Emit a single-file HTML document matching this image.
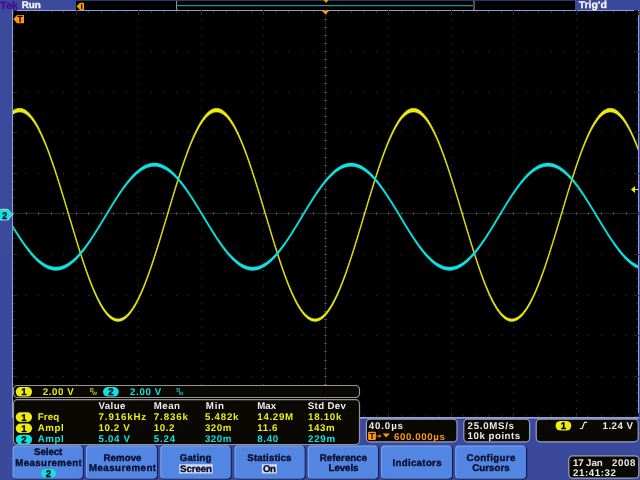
<!DOCTYPE html>
<html><head><meta charset="utf-8"><title>Tek Run Trig'd</title>
<style>html,body{margin:0;padding:0;background:#3c4a9c;overflow:hidden}svg{display:block;will-change:transform;opacity:0.999}text{font-family:"Liberation Sans",sans-serif;font-weight:bold;font-size:9.7px;text-rendering:geometricPrecision}</style>
</head><body>
<svg width="640" height="480" viewBox="0 0 640 480">
<rect x="0" y="0" width="640" height="480" fill="#3c4a9c"/>
<rect x="12" y="10" width="627" height="408" fill="#95a2dc"/>
<rect x="360" y="418" width="280" height="1" fill="#7486d0"/>
<rect x="13" y="11" width="625" height="406" fill="#000"/>
<rect x="76" y="0" width="499" height="10" fill="#000"/>
<rect x="76" y="0" width="499" height="1" fill="#2c356f"/>
<rect x="76" y="10" width="499" height="1" fill="#8d9bd6"/>
<g fill="#343434"><rect x="13" y="51" width="1" height="1"/><rect x="26" y="51" width="1" height="1"/><rect x="38" y="51" width="1" height="1"/><rect x="51" y="51" width="1" height="1"/><rect x="63" y="51" width="1" height="1"/><rect x="76" y="51" width="1" height="1"/><rect x="88" y="51" width="1" height="1"/><rect x="101" y="51" width="1" height="1"/><rect x="113" y="51" width="1" height="1"/><rect x="126" y="51" width="1" height="1"/><rect x="138" y="51" width="1" height="1"/><rect x="151" y="51" width="1" height="1"/><rect x="163" y="51" width="1" height="1"/><rect x="176" y="51" width="1" height="1"/><rect x="188" y="51" width="1" height="1"/><rect x="201" y="51" width="1" height="1"/><rect x="213" y="51" width="1" height="1"/><rect x="226" y="51" width="1" height="1"/><rect x="238" y="51" width="1" height="1"/><rect x="251" y="51" width="1" height="1"/><rect x="263" y="51" width="1" height="1"/><rect x="276" y="51" width="1" height="1"/><rect x="288" y="51" width="1" height="1"/><rect x="301" y="51" width="1" height="1"/><rect x="313" y="51" width="1" height="1"/><rect x="326" y="51" width="1" height="1"/><rect x="338" y="51" width="1" height="1"/><rect x="351" y="51" width="1" height="1"/><rect x="363" y="51" width="1" height="1"/><rect x="376" y="51" width="1" height="1"/><rect x="388" y="51" width="1" height="1"/><rect x="401" y="51" width="1" height="1"/><rect x="413" y="51" width="1" height="1"/><rect x="426" y="51" width="1" height="1"/><rect x="438" y="51" width="1" height="1"/><rect x="451" y="51" width="1" height="1"/><rect x="463" y="51" width="1" height="1"/><rect x="476" y="51" width="1" height="1"/><rect x="488" y="51" width="1" height="1"/><rect x="501" y="51" width="1" height="1"/><rect x="513" y="51" width="1" height="1"/><rect x="526" y="51" width="1" height="1"/><rect x="538" y="51" width="1" height="1"/><rect x="551" y="51" width="1" height="1"/><rect x="563" y="51" width="1" height="1"/><rect x="576" y="51" width="1" height="1"/><rect x="588" y="51" width="1" height="1"/><rect x="601" y="51" width="1" height="1"/><rect x="613" y="51" width="1" height="1"/><rect x="626" y="51" width="1" height="1"/><rect x="638" y="51" width="1" height="1"/><rect x="13" y="92" width="1" height="1"/><rect x="26" y="92" width="1" height="1"/><rect x="38" y="92" width="1" height="1"/><rect x="51" y="92" width="1" height="1"/><rect x="63" y="92" width="1" height="1"/><rect x="76" y="92" width="1" height="1"/><rect x="88" y="92" width="1" height="1"/><rect x="101" y="92" width="1" height="1"/><rect x="113" y="92" width="1" height="1"/><rect x="126" y="92" width="1" height="1"/><rect x="138" y="92" width="1" height="1"/><rect x="151" y="92" width="1" height="1"/><rect x="163" y="92" width="1" height="1"/><rect x="176" y="92" width="1" height="1"/><rect x="188" y="92" width="1" height="1"/><rect x="201" y="92" width="1" height="1"/><rect x="213" y="92" width="1" height="1"/><rect x="226" y="92" width="1" height="1"/><rect x="238" y="92" width="1" height="1"/><rect x="251" y="92" width="1" height="1"/><rect x="263" y="92" width="1" height="1"/><rect x="276" y="92" width="1" height="1"/><rect x="288" y="92" width="1" height="1"/><rect x="301" y="92" width="1" height="1"/><rect x="313" y="92" width="1" height="1"/><rect x="326" y="92" width="1" height="1"/><rect x="338" y="92" width="1" height="1"/><rect x="351" y="92" width="1" height="1"/><rect x="363" y="92" width="1" height="1"/><rect x="376" y="92" width="1" height="1"/><rect x="388" y="92" width="1" height="1"/><rect x="401" y="92" width="1" height="1"/><rect x="413" y="92" width="1" height="1"/><rect x="426" y="92" width="1" height="1"/><rect x="438" y="92" width="1" height="1"/><rect x="451" y="92" width="1" height="1"/><rect x="463" y="92" width="1" height="1"/><rect x="476" y="92" width="1" height="1"/><rect x="488" y="92" width="1" height="1"/><rect x="501" y="92" width="1" height="1"/><rect x="513" y="92" width="1" height="1"/><rect x="526" y="92" width="1" height="1"/><rect x="538" y="92" width="1" height="1"/><rect x="551" y="92" width="1" height="1"/><rect x="563" y="92" width="1" height="1"/><rect x="576" y="92" width="1" height="1"/><rect x="588" y="92" width="1" height="1"/><rect x="601" y="92" width="1" height="1"/><rect x="613" y="92" width="1" height="1"/><rect x="626" y="92" width="1" height="1"/><rect x="638" y="92" width="1" height="1"/><rect x="13" y="132" width="1" height="1"/><rect x="26" y="132" width="1" height="1"/><rect x="38" y="132" width="1" height="1"/><rect x="51" y="132" width="1" height="1"/><rect x="63" y="132" width="1" height="1"/><rect x="76" y="132" width="1" height="1"/><rect x="88" y="132" width="1" height="1"/><rect x="101" y="132" width="1" height="1"/><rect x="113" y="132" width="1" height="1"/><rect x="126" y="132" width="1" height="1"/><rect x="138" y="132" width="1" height="1"/><rect x="151" y="132" width="1" height="1"/><rect x="163" y="132" width="1" height="1"/><rect x="176" y="132" width="1" height="1"/><rect x="188" y="132" width="1" height="1"/><rect x="201" y="132" width="1" height="1"/><rect x="213" y="132" width="1" height="1"/><rect x="226" y="132" width="1" height="1"/><rect x="238" y="132" width="1" height="1"/><rect x="251" y="132" width="1" height="1"/><rect x="263" y="132" width="1" height="1"/><rect x="276" y="132" width="1" height="1"/><rect x="288" y="132" width="1" height="1"/><rect x="301" y="132" width="1" height="1"/><rect x="313" y="132" width="1" height="1"/><rect x="326" y="132" width="1" height="1"/><rect x="338" y="132" width="1" height="1"/><rect x="351" y="132" width="1" height="1"/><rect x="363" y="132" width="1" height="1"/><rect x="376" y="132" width="1" height="1"/><rect x="388" y="132" width="1" height="1"/><rect x="401" y="132" width="1" height="1"/><rect x="413" y="132" width="1" height="1"/><rect x="426" y="132" width="1" height="1"/><rect x="438" y="132" width="1" height="1"/><rect x="451" y="132" width="1" height="1"/><rect x="463" y="132" width="1" height="1"/><rect x="476" y="132" width="1" height="1"/><rect x="488" y="132" width="1" height="1"/><rect x="501" y="132" width="1" height="1"/><rect x="513" y="132" width="1" height="1"/><rect x="526" y="132" width="1" height="1"/><rect x="538" y="132" width="1" height="1"/><rect x="551" y="132" width="1" height="1"/><rect x="563" y="132" width="1" height="1"/><rect x="576" y="132" width="1" height="1"/><rect x="588" y="132" width="1" height="1"/><rect x="601" y="132" width="1" height="1"/><rect x="613" y="132" width="1" height="1"/><rect x="626" y="132" width="1" height="1"/><rect x="638" y="132" width="1" height="1"/><rect x="13" y="173" width="1" height="1"/><rect x="26" y="173" width="1" height="1"/><rect x="38" y="173" width="1" height="1"/><rect x="51" y="173" width="1" height="1"/><rect x="63" y="173" width="1" height="1"/><rect x="76" y="173" width="1" height="1"/><rect x="88" y="173" width="1" height="1"/><rect x="101" y="173" width="1" height="1"/><rect x="113" y="173" width="1" height="1"/><rect x="126" y="173" width="1" height="1"/><rect x="138" y="173" width="1" height="1"/><rect x="151" y="173" width="1" height="1"/><rect x="163" y="173" width="1" height="1"/><rect x="176" y="173" width="1" height="1"/><rect x="188" y="173" width="1" height="1"/><rect x="201" y="173" width="1" height="1"/><rect x="213" y="173" width="1" height="1"/><rect x="226" y="173" width="1" height="1"/><rect x="238" y="173" width="1" height="1"/><rect x="251" y="173" width="1" height="1"/><rect x="263" y="173" width="1" height="1"/><rect x="276" y="173" width="1" height="1"/><rect x="288" y="173" width="1" height="1"/><rect x="301" y="173" width="1" height="1"/><rect x="313" y="173" width="1" height="1"/><rect x="326" y="173" width="1" height="1"/><rect x="338" y="173" width="1" height="1"/><rect x="351" y="173" width="1" height="1"/><rect x="363" y="173" width="1" height="1"/><rect x="376" y="173" width="1" height="1"/><rect x="388" y="173" width="1" height="1"/><rect x="401" y="173" width="1" height="1"/><rect x="413" y="173" width="1" height="1"/><rect x="426" y="173" width="1" height="1"/><rect x="438" y="173" width="1" height="1"/><rect x="451" y="173" width="1" height="1"/><rect x="463" y="173" width="1" height="1"/><rect x="476" y="173" width="1" height="1"/><rect x="488" y="173" width="1" height="1"/><rect x="501" y="173" width="1" height="1"/><rect x="513" y="173" width="1" height="1"/><rect x="526" y="173" width="1" height="1"/><rect x="538" y="173" width="1" height="1"/><rect x="551" y="173" width="1" height="1"/><rect x="563" y="173" width="1" height="1"/><rect x="576" y="173" width="1" height="1"/><rect x="588" y="173" width="1" height="1"/><rect x="601" y="173" width="1" height="1"/><rect x="613" y="173" width="1" height="1"/><rect x="626" y="173" width="1" height="1"/><rect x="638" y="173" width="1" height="1"/><rect x="13" y="254" width="1" height="1"/><rect x="26" y="254" width="1" height="1"/><rect x="38" y="254" width="1" height="1"/><rect x="51" y="254" width="1" height="1"/><rect x="63" y="254" width="1" height="1"/><rect x="76" y="254" width="1" height="1"/><rect x="88" y="254" width="1" height="1"/><rect x="101" y="254" width="1" height="1"/><rect x="113" y="254" width="1" height="1"/><rect x="126" y="254" width="1" height="1"/><rect x="138" y="254" width="1" height="1"/><rect x="151" y="254" width="1" height="1"/><rect x="163" y="254" width="1" height="1"/><rect x="176" y="254" width="1" height="1"/><rect x="188" y="254" width="1" height="1"/><rect x="201" y="254" width="1" height="1"/><rect x="213" y="254" width="1" height="1"/><rect x="226" y="254" width="1" height="1"/><rect x="238" y="254" width="1" height="1"/><rect x="251" y="254" width="1" height="1"/><rect x="263" y="254" width="1" height="1"/><rect x="276" y="254" width="1" height="1"/><rect x="288" y="254" width="1" height="1"/><rect x="301" y="254" width="1" height="1"/><rect x="313" y="254" width="1" height="1"/><rect x="326" y="254" width="1" height="1"/><rect x="338" y="254" width="1" height="1"/><rect x="351" y="254" width="1" height="1"/><rect x="363" y="254" width="1" height="1"/><rect x="376" y="254" width="1" height="1"/><rect x="388" y="254" width="1" height="1"/><rect x="401" y="254" width="1" height="1"/><rect x="413" y="254" width="1" height="1"/><rect x="426" y="254" width="1" height="1"/><rect x="438" y="254" width="1" height="1"/><rect x="451" y="254" width="1" height="1"/><rect x="463" y="254" width="1" height="1"/><rect x="476" y="254" width="1" height="1"/><rect x="488" y="254" width="1" height="1"/><rect x="501" y="254" width="1" height="1"/><rect x="513" y="254" width="1" height="1"/><rect x="526" y="254" width="1" height="1"/><rect x="538" y="254" width="1" height="1"/><rect x="551" y="254" width="1" height="1"/><rect x="563" y="254" width="1" height="1"/><rect x="576" y="254" width="1" height="1"/><rect x="588" y="254" width="1" height="1"/><rect x="601" y="254" width="1" height="1"/><rect x="613" y="254" width="1" height="1"/><rect x="626" y="254" width="1" height="1"/><rect x="638" y="254" width="1" height="1"/><rect x="13" y="295" width="1" height="1"/><rect x="26" y="295" width="1" height="1"/><rect x="38" y="295" width="1" height="1"/><rect x="51" y="295" width="1" height="1"/><rect x="63" y="295" width="1" height="1"/><rect x="76" y="295" width="1" height="1"/><rect x="88" y="295" width="1" height="1"/><rect x="101" y="295" width="1" height="1"/><rect x="113" y="295" width="1" height="1"/><rect x="126" y="295" width="1" height="1"/><rect x="138" y="295" width="1" height="1"/><rect x="151" y="295" width="1" height="1"/><rect x="163" y="295" width="1" height="1"/><rect x="176" y="295" width="1" height="1"/><rect x="188" y="295" width="1" height="1"/><rect x="201" y="295" width="1" height="1"/><rect x="213" y="295" width="1" height="1"/><rect x="226" y="295" width="1" height="1"/><rect x="238" y="295" width="1" height="1"/><rect x="251" y="295" width="1" height="1"/><rect x="263" y="295" width="1" height="1"/><rect x="276" y="295" width="1" height="1"/><rect x="288" y="295" width="1" height="1"/><rect x="301" y="295" width="1" height="1"/><rect x="313" y="295" width="1" height="1"/><rect x="326" y="295" width="1" height="1"/><rect x="338" y="295" width="1" height="1"/><rect x="351" y="295" width="1" height="1"/><rect x="363" y="295" width="1" height="1"/><rect x="376" y="295" width="1" height="1"/><rect x="388" y="295" width="1" height="1"/><rect x="401" y="295" width="1" height="1"/><rect x="413" y="295" width="1" height="1"/><rect x="426" y="295" width="1" height="1"/><rect x="438" y="295" width="1" height="1"/><rect x="451" y="295" width="1" height="1"/><rect x="463" y="295" width="1" height="1"/><rect x="476" y="295" width="1" height="1"/><rect x="488" y="295" width="1" height="1"/><rect x="501" y="295" width="1" height="1"/><rect x="513" y="295" width="1" height="1"/><rect x="526" y="295" width="1" height="1"/><rect x="538" y="295" width="1" height="1"/><rect x="551" y="295" width="1" height="1"/><rect x="563" y="295" width="1" height="1"/><rect x="576" y="295" width="1" height="1"/><rect x="588" y="295" width="1" height="1"/><rect x="601" y="295" width="1" height="1"/><rect x="613" y="295" width="1" height="1"/><rect x="626" y="295" width="1" height="1"/><rect x="638" y="295" width="1" height="1"/><rect x="13" y="335" width="1" height="1"/><rect x="26" y="335" width="1" height="1"/><rect x="38" y="335" width="1" height="1"/><rect x="51" y="335" width="1" height="1"/><rect x="63" y="335" width="1" height="1"/><rect x="76" y="335" width="1" height="1"/><rect x="88" y="335" width="1" height="1"/><rect x="101" y="335" width="1" height="1"/><rect x="113" y="335" width="1" height="1"/><rect x="126" y="335" width="1" height="1"/><rect x="138" y="335" width="1" height="1"/><rect x="151" y="335" width="1" height="1"/><rect x="163" y="335" width="1" height="1"/><rect x="176" y="335" width="1" height="1"/><rect x="188" y="335" width="1" height="1"/><rect x="201" y="335" width="1" height="1"/><rect x="213" y="335" width="1" height="1"/><rect x="226" y="335" width="1" height="1"/><rect x="238" y="335" width="1" height="1"/><rect x="251" y="335" width="1" height="1"/><rect x="263" y="335" width="1" height="1"/><rect x="276" y="335" width="1" height="1"/><rect x="288" y="335" width="1" height="1"/><rect x="301" y="335" width="1" height="1"/><rect x="313" y="335" width="1" height="1"/><rect x="326" y="335" width="1" height="1"/><rect x="338" y="335" width="1" height="1"/><rect x="351" y="335" width="1" height="1"/><rect x="363" y="335" width="1" height="1"/><rect x="376" y="335" width="1" height="1"/><rect x="388" y="335" width="1" height="1"/><rect x="401" y="335" width="1" height="1"/><rect x="413" y="335" width="1" height="1"/><rect x="426" y="335" width="1" height="1"/><rect x="438" y="335" width="1" height="1"/><rect x="451" y="335" width="1" height="1"/><rect x="463" y="335" width="1" height="1"/><rect x="476" y="335" width="1" height="1"/><rect x="488" y="335" width="1" height="1"/><rect x="501" y="335" width="1" height="1"/><rect x="513" y="335" width="1" height="1"/><rect x="526" y="335" width="1" height="1"/><rect x="538" y="335" width="1" height="1"/><rect x="551" y="335" width="1" height="1"/><rect x="563" y="335" width="1" height="1"/><rect x="576" y="335" width="1" height="1"/><rect x="588" y="335" width="1" height="1"/><rect x="601" y="335" width="1" height="1"/><rect x="613" y="335" width="1" height="1"/><rect x="626" y="335" width="1" height="1"/><rect x="638" y="335" width="1" height="1"/><rect x="13" y="376" width="1" height="1"/><rect x="26" y="376" width="1" height="1"/><rect x="38" y="376" width="1" height="1"/><rect x="51" y="376" width="1" height="1"/><rect x="63" y="376" width="1" height="1"/><rect x="76" y="376" width="1" height="1"/><rect x="88" y="376" width="1" height="1"/><rect x="101" y="376" width="1" height="1"/><rect x="113" y="376" width="1" height="1"/><rect x="126" y="376" width="1" height="1"/><rect x="138" y="376" width="1" height="1"/><rect x="151" y="376" width="1" height="1"/><rect x="163" y="376" width="1" height="1"/><rect x="176" y="376" width="1" height="1"/><rect x="188" y="376" width="1" height="1"/><rect x="201" y="376" width="1" height="1"/><rect x="213" y="376" width="1" height="1"/><rect x="226" y="376" width="1" height="1"/><rect x="238" y="376" width="1" height="1"/><rect x="251" y="376" width="1" height="1"/><rect x="263" y="376" width="1" height="1"/><rect x="276" y="376" width="1" height="1"/><rect x="288" y="376" width="1" height="1"/><rect x="301" y="376" width="1" height="1"/><rect x="313" y="376" width="1" height="1"/><rect x="326" y="376" width="1" height="1"/><rect x="338" y="376" width="1" height="1"/><rect x="351" y="376" width="1" height="1"/><rect x="363" y="376" width="1" height="1"/><rect x="376" y="376" width="1" height="1"/><rect x="388" y="376" width="1" height="1"/><rect x="401" y="376" width="1" height="1"/><rect x="413" y="376" width="1" height="1"/><rect x="426" y="376" width="1" height="1"/><rect x="438" y="376" width="1" height="1"/><rect x="451" y="376" width="1" height="1"/><rect x="463" y="376" width="1" height="1"/><rect x="476" y="376" width="1" height="1"/><rect x="488" y="376" width="1" height="1"/><rect x="501" y="376" width="1" height="1"/><rect x="513" y="376" width="1" height="1"/><rect x="526" y="376" width="1" height="1"/><rect x="538" y="376" width="1" height="1"/><rect x="551" y="376" width="1" height="1"/><rect x="563" y="376" width="1" height="1"/><rect x="576" y="376" width="1" height="1"/><rect x="588" y="376" width="1" height="1"/><rect x="601" y="376" width="1" height="1"/><rect x="613" y="376" width="1" height="1"/><rect x="626" y="376" width="1" height="1"/><rect x="638" y="376" width="1" height="1"/><rect x="76" y="10" width="1" height="1"/><rect x="76" y="19" width="1" height="1"/><rect x="76" y="27" width="1" height="1"/><rect x="76" y="35" width="1" height="1"/><rect x="76" y="43" width="1" height="1"/><rect x="76" y="51" width="1" height="1"/><rect x="76" y="59" width="1" height="1"/><rect x="76" y="67" width="1" height="1"/><rect x="76" y="75" width="1" height="1"/><rect x="76" y="83" width="1" height="1"/><rect x="76" y="92" width="1" height="1"/><rect x="76" y="100" width="1" height="1"/><rect x="76" y="108" width="1" height="1"/><rect x="76" y="116" width="1" height="1"/><rect x="76" y="124" width="1" height="1"/><rect x="76" y="132" width="1" height="1"/><rect x="76" y="140" width="1" height="1"/><rect x="76" y="148" width="1" height="1"/><rect x="76" y="157" width="1" height="1"/><rect x="76" y="165" width="1" height="1"/><rect x="76" y="173" width="1" height="1"/><rect x="76" y="181" width="1" height="1"/><rect x="76" y="189" width="1" height="1"/><rect x="76" y="197" width="1" height="1"/><rect x="76" y="205" width="1" height="1"/><rect x="76" y="213" width="1" height="1"/><rect x="76" y="222" width="1" height="1"/><rect x="76" y="230" width="1" height="1"/><rect x="76" y="238" width="1" height="1"/><rect x="76" y="246" width="1" height="1"/><rect x="76" y="254" width="1" height="1"/><rect x="76" y="262" width="1" height="1"/><rect x="76" y="270" width="1" height="1"/><rect x="76" y="278" width="1" height="1"/><rect x="76" y="286" width="1" height="1"/><rect x="76" y="295" width="1" height="1"/><rect x="76" y="303" width="1" height="1"/><rect x="76" y="311" width="1" height="1"/><rect x="76" y="319" width="1" height="1"/><rect x="76" y="327" width="1" height="1"/><rect x="76" y="335" width="1" height="1"/><rect x="76" y="343" width="1" height="1"/><rect x="76" y="351" width="1" height="1"/><rect x="76" y="360" width="1" height="1"/><rect x="76" y="368" width="1" height="1"/><rect x="76" y="376" width="1" height="1"/><rect x="76" y="384" width="1" height="1"/><rect x="76" y="392" width="1" height="1"/><rect x="76" y="400" width="1" height="1"/><rect x="76" y="408" width="1" height="1"/><rect x="76" y="416" width="1" height="1"/><rect x="138" y="10" width="1" height="1"/><rect x="138" y="19" width="1" height="1"/><rect x="138" y="27" width="1" height="1"/><rect x="138" y="35" width="1" height="1"/><rect x="138" y="43" width="1" height="1"/><rect x="138" y="51" width="1" height="1"/><rect x="138" y="59" width="1" height="1"/><rect x="138" y="67" width="1" height="1"/><rect x="138" y="75" width="1" height="1"/><rect x="138" y="83" width="1" height="1"/><rect x="138" y="92" width="1" height="1"/><rect x="138" y="100" width="1" height="1"/><rect x="138" y="108" width="1" height="1"/><rect x="138" y="116" width="1" height="1"/><rect x="138" y="124" width="1" height="1"/><rect x="138" y="132" width="1" height="1"/><rect x="138" y="140" width="1" height="1"/><rect x="138" y="148" width="1" height="1"/><rect x="138" y="157" width="1" height="1"/><rect x="138" y="165" width="1" height="1"/><rect x="138" y="173" width="1" height="1"/><rect x="138" y="181" width="1" height="1"/><rect x="138" y="189" width="1" height="1"/><rect x="138" y="197" width="1" height="1"/><rect x="138" y="205" width="1" height="1"/><rect x="138" y="213" width="1" height="1"/><rect x="138" y="222" width="1" height="1"/><rect x="138" y="230" width="1" height="1"/><rect x="138" y="238" width="1" height="1"/><rect x="138" y="246" width="1" height="1"/><rect x="138" y="254" width="1" height="1"/><rect x="138" y="262" width="1" height="1"/><rect x="138" y="270" width="1" height="1"/><rect x="138" y="278" width="1" height="1"/><rect x="138" y="286" width="1" height="1"/><rect x="138" y="295" width="1" height="1"/><rect x="138" y="303" width="1" height="1"/><rect x="138" y="311" width="1" height="1"/><rect x="138" y="319" width="1" height="1"/><rect x="138" y="327" width="1" height="1"/><rect x="138" y="335" width="1" height="1"/><rect x="138" y="343" width="1" height="1"/><rect x="138" y="351" width="1" height="1"/><rect x="138" y="360" width="1" height="1"/><rect x="138" y="368" width="1" height="1"/><rect x="138" y="376" width="1" height="1"/><rect x="138" y="384" width="1" height="1"/><rect x="138" y="392" width="1" height="1"/><rect x="138" y="400" width="1" height="1"/><rect x="138" y="408" width="1" height="1"/><rect x="138" y="416" width="1" height="1"/><rect x="201" y="10" width="1" height="1"/><rect x="201" y="19" width="1" height="1"/><rect x="201" y="27" width="1" height="1"/><rect x="201" y="35" width="1" height="1"/><rect x="201" y="43" width="1" height="1"/><rect x="201" y="51" width="1" height="1"/><rect x="201" y="59" width="1" height="1"/><rect x="201" y="67" width="1" height="1"/><rect x="201" y="75" width="1" height="1"/><rect x="201" y="83" width="1" height="1"/><rect x="201" y="92" width="1" height="1"/><rect x="201" y="100" width="1" height="1"/><rect x="201" y="108" width="1" height="1"/><rect x="201" y="116" width="1" height="1"/><rect x="201" y="124" width="1" height="1"/><rect x="201" y="132" width="1" height="1"/><rect x="201" y="140" width="1" height="1"/><rect x="201" y="148" width="1" height="1"/><rect x="201" y="157" width="1" height="1"/><rect x="201" y="165" width="1" height="1"/><rect x="201" y="173" width="1" height="1"/><rect x="201" y="181" width="1" height="1"/><rect x="201" y="189" width="1" height="1"/><rect x="201" y="197" width="1" height="1"/><rect x="201" y="205" width="1" height="1"/><rect x="201" y="213" width="1" height="1"/><rect x="201" y="222" width="1" height="1"/><rect x="201" y="230" width="1" height="1"/><rect x="201" y="238" width="1" height="1"/><rect x="201" y="246" width="1" height="1"/><rect x="201" y="254" width="1" height="1"/><rect x="201" y="262" width="1" height="1"/><rect x="201" y="270" width="1" height="1"/><rect x="201" y="278" width="1" height="1"/><rect x="201" y="286" width="1" height="1"/><rect x="201" y="295" width="1" height="1"/><rect x="201" y="303" width="1" height="1"/><rect x="201" y="311" width="1" height="1"/><rect x="201" y="319" width="1" height="1"/><rect x="201" y="327" width="1" height="1"/><rect x="201" y="335" width="1" height="1"/><rect x="201" y="343" width="1" height="1"/><rect x="201" y="351" width="1" height="1"/><rect x="201" y="360" width="1" height="1"/><rect x="201" y="368" width="1" height="1"/><rect x="201" y="376" width="1" height="1"/><rect x="201" y="384" width="1" height="1"/><rect x="201" y="392" width="1" height="1"/><rect x="201" y="400" width="1" height="1"/><rect x="201" y="408" width="1" height="1"/><rect x="201" y="416" width="1" height="1"/><rect x="263" y="10" width="1" height="1"/><rect x="263" y="19" width="1" height="1"/><rect x="263" y="27" width="1" height="1"/><rect x="263" y="35" width="1" height="1"/><rect x="263" y="43" width="1" height="1"/><rect x="263" y="51" width="1" height="1"/><rect x="263" y="59" width="1" height="1"/><rect x="263" y="67" width="1" height="1"/><rect x="263" y="75" width="1" height="1"/><rect x="263" y="83" width="1" height="1"/><rect x="263" y="92" width="1" height="1"/><rect x="263" y="100" width="1" height="1"/><rect x="263" y="108" width="1" height="1"/><rect x="263" y="116" width="1" height="1"/><rect x="263" y="124" width="1" height="1"/><rect x="263" y="132" width="1" height="1"/><rect x="263" y="140" width="1" height="1"/><rect x="263" y="148" width="1" height="1"/><rect x="263" y="157" width="1" height="1"/><rect x="263" y="165" width="1" height="1"/><rect x="263" y="173" width="1" height="1"/><rect x="263" y="181" width="1" height="1"/><rect x="263" y="189" width="1" height="1"/><rect x="263" y="197" width="1" height="1"/><rect x="263" y="205" width="1" height="1"/><rect x="263" y="213" width="1" height="1"/><rect x="263" y="222" width="1" height="1"/><rect x="263" y="230" width="1" height="1"/><rect x="263" y="238" width="1" height="1"/><rect x="263" y="246" width="1" height="1"/><rect x="263" y="254" width="1" height="1"/><rect x="263" y="262" width="1" height="1"/><rect x="263" y="270" width="1" height="1"/><rect x="263" y="278" width="1" height="1"/><rect x="263" y="286" width="1" height="1"/><rect x="263" y="295" width="1" height="1"/><rect x="263" y="303" width="1" height="1"/><rect x="263" y="311" width="1" height="1"/><rect x="263" y="319" width="1" height="1"/><rect x="263" y="327" width="1" height="1"/><rect x="263" y="335" width="1" height="1"/><rect x="263" y="343" width="1" height="1"/><rect x="263" y="351" width="1" height="1"/><rect x="263" y="360" width="1" height="1"/><rect x="263" y="368" width="1" height="1"/><rect x="263" y="376" width="1" height="1"/><rect x="263" y="384" width="1" height="1"/><rect x="263" y="392" width="1" height="1"/><rect x="263" y="400" width="1" height="1"/><rect x="263" y="408" width="1" height="1"/><rect x="263" y="416" width="1" height="1"/><rect x="388" y="10" width="1" height="1"/><rect x="388" y="19" width="1" height="1"/><rect x="388" y="27" width="1" height="1"/><rect x="388" y="35" width="1" height="1"/><rect x="388" y="43" width="1" height="1"/><rect x="388" y="51" width="1" height="1"/><rect x="388" y="59" width="1" height="1"/><rect x="388" y="67" width="1" height="1"/><rect x="388" y="75" width="1" height="1"/><rect x="388" y="83" width="1" height="1"/><rect x="388" y="92" width="1" height="1"/><rect x="388" y="100" width="1" height="1"/><rect x="388" y="108" width="1" height="1"/><rect x="388" y="116" width="1" height="1"/><rect x="388" y="124" width="1" height="1"/><rect x="388" y="132" width="1" height="1"/><rect x="388" y="140" width="1" height="1"/><rect x="388" y="148" width="1" height="1"/><rect x="388" y="157" width="1" height="1"/><rect x="388" y="165" width="1" height="1"/><rect x="388" y="173" width="1" height="1"/><rect x="388" y="181" width="1" height="1"/><rect x="388" y="189" width="1" height="1"/><rect x="388" y="197" width="1" height="1"/><rect x="388" y="205" width="1" height="1"/><rect x="388" y="213" width="1" height="1"/><rect x="388" y="222" width="1" height="1"/><rect x="388" y="230" width="1" height="1"/><rect x="388" y="238" width="1" height="1"/><rect x="388" y="246" width="1" height="1"/><rect x="388" y="254" width="1" height="1"/><rect x="388" y="262" width="1" height="1"/><rect x="388" y="270" width="1" height="1"/><rect x="388" y="278" width="1" height="1"/><rect x="388" y="286" width="1" height="1"/><rect x="388" y="295" width="1" height="1"/><rect x="388" y="303" width="1" height="1"/><rect x="388" y="311" width="1" height="1"/><rect x="388" y="319" width="1" height="1"/><rect x="388" y="327" width="1" height="1"/><rect x="388" y="335" width="1" height="1"/><rect x="388" y="343" width="1" height="1"/><rect x="388" y="351" width="1" height="1"/><rect x="388" y="360" width="1" height="1"/><rect x="388" y="368" width="1" height="1"/><rect x="388" y="376" width="1" height="1"/><rect x="388" y="384" width="1" height="1"/><rect x="388" y="392" width="1" height="1"/><rect x="388" y="400" width="1" height="1"/><rect x="388" y="408" width="1" height="1"/><rect x="388" y="416" width="1" height="1"/><rect x="451" y="10" width="1" height="1"/><rect x="451" y="19" width="1" height="1"/><rect x="451" y="27" width="1" height="1"/><rect x="451" y="35" width="1" height="1"/><rect x="451" y="43" width="1" height="1"/><rect x="451" y="51" width="1" height="1"/><rect x="451" y="59" width="1" height="1"/><rect x="451" y="67" width="1" height="1"/><rect x="451" y="75" width="1" height="1"/><rect x="451" y="83" width="1" height="1"/><rect x="451" y="92" width="1" height="1"/><rect x="451" y="100" width="1" height="1"/><rect x="451" y="108" width="1" height="1"/><rect x="451" y="116" width="1" height="1"/><rect x="451" y="124" width="1" height="1"/><rect x="451" y="132" width="1" height="1"/><rect x="451" y="140" width="1" height="1"/><rect x="451" y="148" width="1" height="1"/><rect x="451" y="157" width="1" height="1"/><rect x="451" y="165" width="1" height="1"/><rect x="451" y="173" width="1" height="1"/><rect x="451" y="181" width="1" height="1"/><rect x="451" y="189" width="1" height="1"/><rect x="451" y="197" width="1" height="1"/><rect x="451" y="205" width="1" height="1"/><rect x="451" y="213" width="1" height="1"/><rect x="451" y="222" width="1" height="1"/><rect x="451" y="230" width="1" height="1"/><rect x="451" y="238" width="1" height="1"/><rect x="451" y="246" width="1" height="1"/><rect x="451" y="254" width="1" height="1"/><rect x="451" y="262" width="1" height="1"/><rect x="451" y="270" width="1" height="1"/><rect x="451" y="278" width="1" height="1"/><rect x="451" y="286" width="1" height="1"/><rect x="451" y="295" width="1" height="1"/><rect x="451" y="303" width="1" height="1"/><rect x="451" y="311" width="1" height="1"/><rect x="451" y="319" width="1" height="1"/><rect x="451" y="327" width="1" height="1"/><rect x="451" y="335" width="1" height="1"/><rect x="451" y="343" width="1" height="1"/><rect x="451" y="351" width="1" height="1"/><rect x="451" y="360" width="1" height="1"/><rect x="451" y="368" width="1" height="1"/><rect x="451" y="376" width="1" height="1"/><rect x="451" y="384" width="1" height="1"/><rect x="451" y="392" width="1" height="1"/><rect x="451" y="400" width="1" height="1"/><rect x="451" y="408" width="1" height="1"/><rect x="451" y="416" width="1" height="1"/><rect x="513" y="10" width="1" height="1"/><rect x="513" y="19" width="1" height="1"/><rect x="513" y="27" width="1" height="1"/><rect x="513" y="35" width="1" height="1"/><rect x="513" y="43" width="1" height="1"/><rect x="513" y="51" width="1" height="1"/><rect x="513" y="59" width="1" height="1"/><rect x="513" y="67" width="1" height="1"/><rect x="513" y="75" width="1" height="1"/><rect x="513" y="83" width="1" height="1"/><rect x="513" y="92" width="1" height="1"/><rect x="513" y="100" width="1" height="1"/><rect x="513" y="108" width="1" height="1"/><rect x="513" y="116" width="1" height="1"/><rect x="513" y="124" width="1" height="1"/><rect x="513" y="132" width="1" height="1"/><rect x="513" y="140" width="1" height="1"/><rect x="513" y="148" width="1" height="1"/><rect x="513" y="157" width="1" height="1"/><rect x="513" y="165" width="1" height="1"/><rect x="513" y="173" width="1" height="1"/><rect x="513" y="181" width="1" height="1"/><rect x="513" y="189" width="1" height="1"/><rect x="513" y="197" width="1" height="1"/><rect x="513" y="205" width="1" height="1"/><rect x="513" y="213" width="1" height="1"/><rect x="513" y="222" width="1" height="1"/><rect x="513" y="230" width="1" height="1"/><rect x="513" y="238" width="1" height="1"/><rect x="513" y="246" width="1" height="1"/><rect x="513" y="254" width="1" height="1"/><rect x="513" y="262" width="1" height="1"/><rect x="513" y="270" width="1" height="1"/><rect x="513" y="278" width="1" height="1"/><rect x="513" y="286" width="1" height="1"/><rect x="513" y="295" width="1" height="1"/><rect x="513" y="303" width="1" height="1"/><rect x="513" y="311" width="1" height="1"/><rect x="513" y="319" width="1" height="1"/><rect x="513" y="327" width="1" height="1"/><rect x="513" y="335" width="1" height="1"/><rect x="513" y="343" width="1" height="1"/><rect x="513" y="351" width="1" height="1"/><rect x="513" y="360" width="1" height="1"/><rect x="513" y="368" width="1" height="1"/><rect x="513" y="376" width="1" height="1"/><rect x="513" y="384" width="1" height="1"/><rect x="513" y="392" width="1" height="1"/><rect x="513" y="400" width="1" height="1"/><rect x="513" y="408" width="1" height="1"/><rect x="513" y="416" width="1" height="1"/><rect x="576" y="10" width="1" height="1"/><rect x="576" y="19" width="1" height="1"/><rect x="576" y="27" width="1" height="1"/><rect x="576" y="35" width="1" height="1"/><rect x="576" y="43" width="1" height="1"/><rect x="576" y="51" width="1" height="1"/><rect x="576" y="59" width="1" height="1"/><rect x="576" y="67" width="1" height="1"/><rect x="576" y="75" width="1" height="1"/><rect x="576" y="83" width="1" height="1"/><rect x="576" y="92" width="1" height="1"/><rect x="576" y="100" width="1" height="1"/><rect x="576" y="108" width="1" height="1"/><rect x="576" y="116" width="1" height="1"/><rect x="576" y="124" width="1" height="1"/><rect x="576" y="132" width="1" height="1"/><rect x="576" y="140" width="1" height="1"/><rect x="576" y="148" width="1" height="1"/><rect x="576" y="157" width="1" height="1"/><rect x="576" y="165" width="1" height="1"/><rect x="576" y="173" width="1" height="1"/><rect x="576" y="181" width="1" height="1"/><rect x="576" y="189" width="1" height="1"/><rect x="576" y="197" width="1" height="1"/><rect x="576" y="205" width="1" height="1"/><rect x="576" y="213" width="1" height="1"/><rect x="576" y="222" width="1" height="1"/><rect x="576" y="230" width="1" height="1"/><rect x="576" y="238" width="1" height="1"/><rect x="576" y="246" width="1" height="1"/><rect x="576" y="254" width="1" height="1"/><rect x="576" y="262" width="1" height="1"/><rect x="576" y="270" width="1" height="1"/><rect x="576" y="278" width="1" height="1"/><rect x="576" y="286" width="1" height="1"/><rect x="576" y="295" width="1" height="1"/><rect x="576" y="303" width="1" height="1"/><rect x="576" y="311" width="1" height="1"/><rect x="576" y="319" width="1" height="1"/><rect x="576" y="327" width="1" height="1"/><rect x="576" y="335" width="1" height="1"/><rect x="576" y="343" width="1" height="1"/><rect x="576" y="351" width="1" height="1"/><rect x="576" y="360" width="1" height="1"/><rect x="576" y="368" width="1" height="1"/><rect x="576" y="376" width="1" height="1"/><rect x="576" y="384" width="1" height="1"/><rect x="576" y="392" width="1" height="1"/><rect x="576" y="400" width="1" height="1"/><rect x="576" y="408" width="1" height="1"/><rect x="576" y="416" width="1" height="1"/></g>
<g fill="#282828"><rect x="13" y="11" width="1" height="4"/><rect x="13" y="413" width="1" height="4"/><rect x="26" y="11" width="1" height="2"/><rect x="26" y="415" width="1" height="2"/><rect x="38" y="11" width="1" height="2"/><rect x="38" y="415" width="1" height="2"/><rect x="51" y="11" width="1" height="2"/><rect x="51" y="415" width="1" height="2"/><rect x="63" y="11" width="1" height="2"/><rect x="63" y="415" width="1" height="2"/><rect x="76" y="11" width="1" height="4"/><rect x="76" y="413" width="1" height="4"/><rect x="88" y="11" width="1" height="2"/><rect x="88" y="415" width="1" height="2"/><rect x="101" y="11" width="1" height="2"/><rect x="101" y="415" width="1" height="2"/><rect x="113" y="11" width="1" height="2"/><rect x="113" y="415" width="1" height="2"/><rect x="126" y="11" width="1" height="2"/><rect x="126" y="415" width="1" height="2"/><rect x="138" y="11" width="1" height="4"/><rect x="138" y="413" width="1" height="4"/><rect x="151" y="11" width="1" height="2"/><rect x="151" y="415" width="1" height="2"/><rect x="163" y="11" width="1" height="2"/><rect x="163" y="415" width="1" height="2"/><rect x="176" y="11" width="1" height="2"/><rect x="176" y="415" width="1" height="2"/><rect x="188" y="11" width="1" height="2"/><rect x="188" y="415" width="1" height="2"/><rect x="201" y="11" width="1" height="4"/><rect x="201" y="413" width="1" height="4"/><rect x="213" y="11" width="1" height="2"/><rect x="213" y="415" width="1" height="2"/><rect x="226" y="11" width="1" height="2"/><rect x="226" y="415" width="1" height="2"/><rect x="238" y="11" width="1" height="2"/><rect x="238" y="415" width="1" height="2"/><rect x="251" y="11" width="1" height="2"/><rect x="251" y="415" width="1" height="2"/><rect x="263" y="11" width="1" height="4"/><rect x="263" y="413" width="1" height="4"/><rect x="276" y="11" width="1" height="2"/><rect x="276" y="415" width="1" height="2"/><rect x="288" y="11" width="1" height="2"/><rect x="288" y="415" width="1" height="2"/><rect x="301" y="11" width="1" height="2"/><rect x="301" y="415" width="1" height="2"/><rect x="313" y="11" width="1" height="2"/><rect x="313" y="415" width="1" height="2"/><rect x="326" y="11" width="1" height="4"/><rect x="326" y="413" width="1" height="4"/><rect x="338" y="11" width="1" height="2"/><rect x="338" y="415" width="1" height="2"/><rect x="351" y="11" width="1" height="2"/><rect x="351" y="415" width="1" height="2"/><rect x="363" y="11" width="1" height="2"/><rect x="363" y="415" width="1" height="2"/><rect x="376" y="11" width="1" height="2"/><rect x="376" y="415" width="1" height="2"/><rect x="388" y="11" width="1" height="4"/><rect x="388" y="413" width="1" height="4"/><rect x="401" y="11" width="1" height="2"/><rect x="401" y="415" width="1" height="2"/><rect x="413" y="11" width="1" height="2"/><rect x="413" y="415" width="1" height="2"/><rect x="426" y="11" width="1" height="2"/><rect x="426" y="415" width="1" height="2"/><rect x="438" y="11" width="1" height="2"/><rect x="438" y="415" width="1" height="2"/><rect x="451" y="11" width="1" height="4"/><rect x="451" y="413" width="1" height="4"/><rect x="463" y="11" width="1" height="2"/><rect x="463" y="415" width="1" height="2"/><rect x="476" y="11" width="1" height="2"/><rect x="476" y="415" width="1" height="2"/><rect x="488" y="11" width="1" height="2"/><rect x="488" y="415" width="1" height="2"/><rect x="501" y="11" width="1" height="2"/><rect x="501" y="415" width="1" height="2"/><rect x="513" y="11" width="1" height="4"/><rect x="513" y="413" width="1" height="4"/><rect x="526" y="11" width="1" height="2"/><rect x="526" y="415" width="1" height="2"/><rect x="538" y="11" width="1" height="2"/><rect x="538" y="415" width="1" height="2"/><rect x="551" y="11" width="1" height="2"/><rect x="551" y="415" width="1" height="2"/><rect x="563" y="11" width="1" height="2"/><rect x="563" y="415" width="1" height="2"/><rect x="576" y="11" width="1" height="4"/><rect x="576" y="413" width="1" height="4"/><rect x="588" y="11" width="1" height="2"/><rect x="588" y="415" width="1" height="2"/><rect x="601" y="11" width="1" height="2"/><rect x="601" y="415" width="1" height="2"/><rect x="613" y="11" width="1" height="2"/><rect x="613" y="415" width="1" height="2"/><rect x="626" y="11" width="1" height="2"/><rect x="626" y="415" width="1" height="2"/><rect x="638" y="11" width="1" height="4"/><rect x="638" y="413" width="1" height="4"/><rect x="13" y="10" width="4" height="1"/><rect x="634" y="10" width="4" height="1"/><rect x="13" y="19" width="2" height="1"/><rect x="636" y="19" width="2" height="1"/><rect x="13" y="27" width="2" height="1"/><rect x="636" y="27" width="2" height="1"/><rect x="13" y="35" width="2" height="1"/><rect x="636" y="35" width="2" height="1"/><rect x="13" y="43" width="2" height="1"/><rect x="636" y="43" width="2" height="1"/><rect x="13" y="51" width="4" height="1"/><rect x="634" y="51" width="4" height="1"/><rect x="13" y="59" width="2" height="1"/><rect x="636" y="59" width="2" height="1"/><rect x="13" y="67" width="2" height="1"/><rect x="636" y="67" width="2" height="1"/><rect x="13" y="75" width="2" height="1"/><rect x="636" y="75" width="2" height="1"/><rect x="13" y="83" width="2" height="1"/><rect x="636" y="83" width="2" height="1"/><rect x="13" y="92" width="4" height="1"/><rect x="634" y="92" width="4" height="1"/><rect x="13" y="100" width="2" height="1"/><rect x="636" y="100" width="2" height="1"/><rect x="13" y="108" width="2" height="1"/><rect x="636" y="108" width="2" height="1"/><rect x="13" y="116" width="2" height="1"/><rect x="636" y="116" width="2" height="1"/><rect x="13" y="124" width="2" height="1"/><rect x="636" y="124" width="2" height="1"/><rect x="13" y="132" width="4" height="1"/><rect x="634" y="132" width="4" height="1"/><rect x="13" y="140" width="2" height="1"/><rect x="636" y="140" width="2" height="1"/><rect x="13" y="148" width="2" height="1"/><rect x="636" y="148" width="2" height="1"/><rect x="13" y="157" width="2" height="1"/><rect x="636" y="157" width="2" height="1"/><rect x="13" y="165" width="2" height="1"/><rect x="636" y="165" width="2" height="1"/><rect x="13" y="173" width="4" height="1"/><rect x="634" y="173" width="4" height="1"/><rect x="13" y="181" width="2" height="1"/><rect x="636" y="181" width="2" height="1"/><rect x="13" y="189" width="2" height="1"/><rect x="636" y="189" width="2" height="1"/><rect x="13" y="197" width="2" height="1"/><rect x="636" y="197" width="2" height="1"/><rect x="13" y="205" width="2" height="1"/><rect x="636" y="205" width="2" height="1"/><rect x="13" y="213" width="4" height="1"/><rect x="634" y="213" width="4" height="1"/><rect x="13" y="222" width="2" height="1"/><rect x="636" y="222" width="2" height="1"/><rect x="13" y="230" width="2" height="1"/><rect x="636" y="230" width="2" height="1"/><rect x="13" y="238" width="2" height="1"/><rect x="636" y="238" width="2" height="1"/><rect x="13" y="246" width="2" height="1"/><rect x="636" y="246" width="2" height="1"/><rect x="13" y="254" width="4" height="1"/><rect x="634" y="254" width="4" height="1"/><rect x="13" y="262" width="2" height="1"/><rect x="636" y="262" width="2" height="1"/><rect x="13" y="270" width="2" height="1"/><rect x="636" y="270" width="2" height="1"/><rect x="13" y="278" width="2" height="1"/><rect x="636" y="278" width="2" height="1"/><rect x="13" y="286" width="2" height="1"/><rect x="636" y="286" width="2" height="1"/><rect x="13" y="295" width="4" height="1"/><rect x="634" y="295" width="4" height="1"/><rect x="13" y="303" width="2" height="1"/><rect x="636" y="303" width="2" height="1"/><rect x="13" y="311" width="2" height="1"/><rect x="636" y="311" width="2" height="1"/><rect x="13" y="319" width="2" height="1"/><rect x="636" y="319" width="2" height="1"/><rect x="13" y="327" width="2" height="1"/><rect x="636" y="327" width="2" height="1"/><rect x="13" y="335" width="4" height="1"/><rect x="634" y="335" width="4" height="1"/><rect x="13" y="343" width="2" height="1"/><rect x="636" y="343" width="2" height="1"/><rect x="13" y="351" width="2" height="1"/><rect x="636" y="351" width="2" height="1"/><rect x="13" y="360" width="2" height="1"/><rect x="636" y="360" width="2" height="1"/><rect x="13" y="368" width="2" height="1"/><rect x="636" y="368" width="2" height="1"/><rect x="13" y="376" width="4" height="1"/><rect x="634" y="376" width="4" height="1"/><rect x="13" y="384" width="2" height="1"/><rect x="636" y="384" width="2" height="1"/><rect x="13" y="392" width="2" height="1"/><rect x="636" y="392" width="2" height="1"/><rect x="13" y="400" width="2" height="1"/><rect x="636" y="400" width="2" height="1"/><rect x="13" y="408" width="2" height="1"/><rect x="636" y="408" width="2" height="1"/><rect x="13" y="416" width="4" height="1"/><rect x="634" y="416" width="4" height="1"/></g>
<rect x="13" y="213" width="625" height="1" fill="#272727"/>
<rect x="325" y="11" width="1" height="406" fill="#262626"/>
<g fill="#4a4a4a"><rect x="13" y="212" width="1" height="3"/><rect x="26" y="212" width="1" height="3"/><rect x="38" y="212" width="1" height="3"/><rect x="51" y="212" width="1" height="3"/><rect x="63" y="212" width="1" height="3"/><rect x="76" y="212" width="1" height="3"/><rect x="88" y="212" width="1" height="3"/><rect x="101" y="212" width="1" height="3"/><rect x="113" y="212" width="1" height="3"/><rect x="126" y="212" width="1" height="3"/><rect x="138" y="212" width="1" height="3"/><rect x="151" y="212" width="1" height="3"/><rect x="163" y="212" width="1" height="3"/><rect x="176" y="212" width="1" height="3"/><rect x="188" y="212" width="1" height="3"/><rect x="201" y="212" width="1" height="3"/><rect x="213" y="212" width="1" height="3"/><rect x="226" y="212" width="1" height="3"/><rect x="238" y="212" width="1" height="3"/><rect x="251" y="212" width="1" height="3"/><rect x="263" y="212" width="1" height="3"/><rect x="276" y="212" width="1" height="3"/><rect x="288" y="212" width="1" height="3"/><rect x="301" y="212" width="1" height="3"/><rect x="313" y="212" width="1" height="3"/><rect x="326" y="212" width="1" height="3"/><rect x="338" y="212" width="1" height="3"/><rect x="351" y="212" width="1" height="3"/><rect x="363" y="212" width="1" height="3"/><rect x="376" y="212" width="1" height="3"/><rect x="388" y="212" width="1" height="3"/><rect x="401" y="212" width="1" height="3"/><rect x="413" y="212" width="1" height="3"/><rect x="426" y="212" width="1" height="3"/><rect x="438" y="212" width="1" height="3"/><rect x="451" y="212" width="1" height="3"/><rect x="463" y="212" width="1" height="3"/><rect x="476" y="212" width="1" height="3"/><rect x="488" y="212" width="1" height="3"/><rect x="501" y="212" width="1" height="3"/><rect x="513" y="212" width="1" height="3"/><rect x="526" y="212" width="1" height="3"/><rect x="538" y="212" width="1" height="3"/><rect x="551" y="212" width="1" height="3"/><rect x="563" y="212" width="1" height="3"/><rect x="576" y="212" width="1" height="3"/><rect x="588" y="212" width="1" height="3"/><rect x="601" y="212" width="1" height="3"/><rect x="613" y="212" width="1" height="3"/><rect x="626" y="212" width="1" height="3"/><rect x="638" y="212" width="1" height="3"/><rect x="324" y="10" width="3" height="1"/><rect x="324" y="19" width="3" height="1"/><rect x="324" y="27" width="3" height="1"/><rect x="324" y="35" width="3" height="1"/><rect x="324" y="43" width="3" height="1"/><rect x="324" y="51" width="3" height="1"/><rect x="324" y="59" width="3" height="1"/><rect x="324" y="67" width="3" height="1"/><rect x="324" y="75" width="3" height="1"/><rect x="324" y="83" width="3" height="1"/><rect x="324" y="92" width="3" height="1"/><rect x="324" y="100" width="3" height="1"/><rect x="324" y="108" width="3" height="1"/><rect x="324" y="116" width="3" height="1"/><rect x="324" y="124" width="3" height="1"/><rect x="324" y="132" width="3" height="1"/><rect x="324" y="140" width="3" height="1"/><rect x="324" y="148" width="3" height="1"/><rect x="324" y="157" width="3" height="1"/><rect x="324" y="165" width="3" height="1"/><rect x="324" y="173" width="3" height="1"/><rect x="324" y="181" width="3" height="1"/><rect x="324" y="189" width="3" height="1"/><rect x="324" y="197" width="3" height="1"/><rect x="324" y="205" width="3" height="1"/><rect x="324" y="213" width="3" height="1"/><rect x="324" y="222" width="3" height="1"/><rect x="324" y="230" width="3" height="1"/><rect x="324" y="238" width="3" height="1"/><rect x="324" y="246" width="3" height="1"/><rect x="324" y="254" width="3" height="1"/><rect x="324" y="262" width="3" height="1"/><rect x="324" y="270" width="3" height="1"/><rect x="324" y="278" width="3" height="1"/><rect x="324" y="286" width="3" height="1"/><rect x="324" y="295" width="3" height="1"/><rect x="324" y="303" width="3" height="1"/><rect x="324" y="311" width="3" height="1"/><rect x="324" y="319" width="3" height="1"/><rect x="324" y="327" width="3" height="1"/><rect x="324" y="335" width="3" height="1"/><rect x="324" y="343" width="3" height="1"/><rect x="324" y="351" width="3" height="1"/><rect x="324" y="360" width="3" height="1"/><rect x="324" y="368" width="3" height="1"/><rect x="324" y="376" width="3" height="1"/><rect x="324" y="384" width="3" height="1"/><rect x="324" y="392" width="3" height="1"/><rect x="324" y="400" width="3" height="1"/><rect x="324" y="408" width="3" height="1"/><rect x="324" y="416" width="3" height="1"/></g>
<clipPath id="pc"><rect x="13" y="11" width="625" height="406"/></clipPath>
<g clip-path="url(#pc)">
<path d="M12.0 111.5L13.0 110.7L14.0 110.1L15.0 109.5L16.0 109.1L17.0 108.7L18.0 108.5L19.0 108.4L20.0 108.4L21.0 108.5L22.0 108.7L23.0 109.0L24.0 109.4L25.0 110.0L26.0 110.6L27.0 111.4L28.0 112.2L29.0 113.2L30.0 114.3L31.0 115.4L32.0 116.7L33.0 118.1L34.0 119.5L35.0 121.1L36.0 122.8L37.0 124.5L38.0 126.3L39.0 128.3L40.0 130.3L41.0 132.4L42.0 134.5L43.0 136.8L44.0 139.1L45.0 141.5L46.0 144.0L47.0 146.6L48.0 149.2L49.0 151.8L50.0 154.6L51.0 157.4L52.0 160.2L53.0 163.1L54.0 166.1L55.0 169.1L56.0 172.2L57.0 175.3L58.0 178.4L59.0 181.6L60.0 184.8L61.0 188.0L62.0 191.3L63.0 194.5L64.0 197.8L65.0 201.2L66.0 204.5L67.0 207.8L68.0 211.2L69.0 214.5L70.0 217.9L71.0 221.2L72.0 224.6L73.0 227.9L74.0 231.2L75.0 234.5L76.0 237.8L77.0 241.0L78.0 244.3L79.0 247.4L80.0 250.6L81.0 253.7L82.0 256.8L83.0 259.8L84.0 262.8L85.0 265.8L86.0 268.7L87.0 271.5L88.0 274.3L89.0 277.0L90.0 279.6L91.0 282.2L92.0 284.7L93.0 287.2L94.0 289.5L95.0 291.8L96.0 294.0L97.0 296.1L98.0 298.2L99.0 300.1L100.0 302.0L101.0 303.8L102.0 305.5L103.0 307.1L104.0 308.6L105.0 310.0L106.0 311.3L107.0 312.5L108.0 313.6L109.0 314.6L110.0 315.5L111.0 316.3L112.0 317.0L113.0 317.6L114.0 318.1L115.0 318.5L116.0 318.7L117.0 318.9L118.0 318.9L119.0 318.9L120.0 318.7L121.0 318.5L122.0 318.1L123.0 317.6L124.0 317.1L125.0 316.4L126.0 315.6L127.0 314.7L128.0 313.7L129.0 312.6L130.0 311.4L131.0 310.1L132.0 308.7L133.0 307.2L134.0 305.6L135.0 304.0L136.0 302.2L137.0 300.3L138.0 298.4L139.0 296.3L140.0 294.2L141.0 292.0L142.0 289.7L143.0 287.4L144.0 285.0L145.0 282.5L146.0 279.9L147.0 277.2L148.0 274.5L149.0 271.8L150.0 268.9L151.0 266.1L152.0 263.1L153.0 260.1L154.0 257.1L155.0 254.0L156.0 250.9L157.0 247.8L158.0 244.6L159.0 241.4L160.0 238.1L161.0 234.8L162.0 231.5L163.0 228.2L164.0 224.9L165.0 221.6L166.0 218.2L167.0 214.9L168.0 211.5L169.0 208.2L170.0 204.8L171.0 201.5L172.0 198.2L173.0 194.9L174.0 191.6L175.0 188.3L176.0 185.1L177.0 181.9L178.0 178.7L179.0 175.6L180.0 172.5L181.0 169.4L182.0 166.4L183.0 163.4L184.0 160.5L185.0 157.7L186.0 154.9L187.0 152.1L188.0 149.4L189.0 146.8L190.0 144.3L191.0 141.8L192.0 139.4L193.0 137.0L194.0 134.8L195.0 132.6L196.0 130.5L197.0 128.5L198.0 126.5L199.0 124.7L200.0 122.9L201.0 121.3L202.0 119.7L203.0 118.2L204.0 116.8L205.0 115.5L206.0 114.4L207.0 113.3L208.0 112.3L209.0 111.4L210.0 110.7L211.0 110.0L212.0 109.5L213.0 109.0L214.0 108.7L215.0 108.5L216.0 108.4L217.0 108.4L218.0 108.5L219.0 108.7L220.0 109.0L221.0 109.5L222.0 110.0L223.0 110.7L224.0 111.4L225.0 112.3L226.0 113.3L227.0 114.4L228.0 115.5L229.0 116.8L230.0 118.2L231.0 119.7L232.0 121.3L233.0 122.9L234.0 124.7L235.0 126.5L236.0 128.5L237.0 130.5L238.0 132.6L239.0 134.8L240.0 137.0L241.0 139.4L242.0 141.8L243.0 144.3L244.0 146.8L245.0 149.4L246.0 152.1L247.0 154.9L248.0 157.7L249.0 160.5L250.0 163.4L251.0 166.4L252.0 169.4L253.0 172.5L254.0 175.6L255.0 178.7L256.0 181.9L257.0 185.1L258.0 188.3L259.0 191.6L260.0 194.9L261.0 198.2L262.0 201.5L263.0 204.8L264.0 208.2L265.0 211.5L266.0 214.9L267.0 218.2L268.0 221.6L269.0 224.9L270.0 228.2L271.0 231.5L272.0 234.8L273.0 238.1L274.0 241.4L275.0 244.6L276.0 247.8L277.0 250.9L278.0 254.0L279.0 257.1L280.0 260.1L281.0 263.1L282.0 266.1L283.0 268.9L284.0 271.8L285.0 274.5L286.0 277.2L287.0 279.9L288.0 282.5L289.0 285.0L290.0 287.4L291.0 289.7L292.0 292.0L293.0 294.2L294.0 296.3L295.0 298.4L296.0 300.3L297.0 302.2L298.0 304.0L299.0 305.6L300.0 307.2L301.0 308.7L302.0 310.1L303.0 311.4L304.0 312.6L305.0 313.7L306.0 314.7L307.0 315.6L308.0 316.4L309.0 317.1L310.0 317.6L311.0 318.1L312.0 318.5L313.0 318.7L314.0 318.9L315.0 318.9L316.0 318.9L317.0 318.7L318.0 318.5L319.0 318.1L320.0 317.6L321.0 317.0L322.0 316.3L323.0 315.5L324.0 314.6L325.0 313.6L326.0 312.5L327.0 311.3L328.0 310.0L329.0 308.6L330.0 307.1L331.0 305.5L332.0 303.8L333.0 302.0L334.0 300.1L335.0 298.2L336.0 296.1L337.0 294.0L338.0 291.8L339.0 289.5L340.0 287.2L341.0 284.7L342.0 282.2L343.0 279.6L344.0 277.0L345.0 274.3L346.0 271.5L347.0 268.7L348.0 265.8L349.0 262.8L350.0 259.8L351.0 256.8L352.0 253.7L353.0 250.6L354.0 247.4L355.0 244.3L356.0 241.0L357.0 237.8L358.0 234.5L359.0 231.2L360.0 227.9L361.0 224.6L362.0 221.2L363.0 217.9L364.0 214.5L365.0 211.2L366.0 207.8L367.0 204.5L368.0 201.2L369.0 197.8L370.0 194.5L371.0 191.3L372.0 188.0L373.0 184.8L374.0 181.6L375.0 178.4L376.0 175.3L377.0 172.2L378.0 169.1L379.0 166.1L380.0 163.1L381.0 160.2L382.0 157.4L383.0 154.6L384.0 151.8L385.0 149.2L386.0 146.6L387.0 144.0L388.0 141.5L389.0 139.1L390.0 136.8L391.0 134.5L392.0 132.4L393.0 130.3L394.0 128.3L395.0 126.3L396.0 124.5L397.0 122.8L398.0 121.1L399.0 119.5L400.0 118.1L401.0 116.7L402.0 115.4L403.0 114.3L404.0 113.2L405.0 112.2L406.0 111.4L407.0 110.6L408.0 110.0L409.0 109.4L410.0 109.0L411.0 108.7L412.0 108.5L413.0 108.4L414.0 108.4L415.0 108.5L416.0 108.7L417.0 109.1L418.0 109.5L419.0 110.1L420.0 110.7L421.0 111.5L422.0 112.4L423.0 113.4L424.0 114.5L425.0 115.7L426.0 117.0L427.0 118.3L428.0 119.8L429.0 121.4L430.0 123.1L431.0 124.9L432.0 126.7L433.0 128.7L434.0 130.7L435.0 132.8L436.0 135.0L437.0 137.3L438.0 139.6L439.0 142.0L440.0 144.5L441.0 147.1L442.0 149.7L443.0 152.4L444.0 155.1L445.0 157.9L446.0 160.8L447.0 163.7L448.0 166.7L449.0 169.7L450.0 172.8L451.0 175.9L452.0 179.0L453.0 182.2L454.0 185.4L455.0 188.7L456.0 191.9L457.0 195.2L458.0 198.5L459.0 201.8L460.0 205.2L461.0 208.5L462.0 211.9L463.0 215.2L464.0 218.6L465.0 221.9L466.0 225.2L467.0 228.6L468.0 231.9L469.0 235.2L470.0 238.4L471.0 241.7L472.0 244.9L473.0 248.1L474.0 251.2L475.0 254.3L476.0 257.4L477.0 260.4L478.0 263.4L479.0 266.4L480.0 269.2L481.0 272.0L482.0 274.8L483.0 277.5L484.0 280.1L485.0 282.7L486.0 285.2L487.0 287.6L488.0 290.0L489.0 292.3L490.0 294.4L491.0 296.6L492.0 298.6L493.0 300.5L494.0 302.4L495.0 304.1L496.0 305.8L497.0 307.4L498.0 308.9L499.0 310.2L500.0 311.5L501.0 312.7L502.0 313.8L503.0 314.8L504.0 315.7L505.0 316.5L506.0 317.1L507.0 317.7L508.0 318.2L509.0 318.5L510.0 318.8L511.0 318.9L512.0 318.9L513.0 318.9L514.0 318.7L515.0 318.4L516.0 318.0L517.0 317.5L518.0 316.9L519.0 316.2L520.0 315.4L521.0 314.5L522.0 313.5L523.0 312.4L524.0 311.2L525.0 309.8L526.0 308.4L527.0 306.9L528.0 305.3L529.0 303.6L530.0 301.8L531.0 299.9L532.0 298.0L533.0 295.9L534.0 293.8L535.0 291.6L536.0 289.3L537.0 286.9L538.0 284.5L539.0 281.9L540.0 279.4L541.0 276.7L542.0 274.0L543.0 271.2L544.0 268.4L545.0 265.5L546.0 262.5L547.0 259.5L548.0 256.5L549.0 253.4L550.0 250.3L551.0 247.1L552.0 243.9L553.0 240.7L554.0 237.5L555.0 234.2L556.0 230.9L557.0 227.6L558.0 224.2L559.0 220.9L560.0 217.6L561.0 214.2L562.0 210.9L563.0 207.5L564.0 204.2L565.0 200.8L566.0 197.5L567.0 194.2L568.0 190.9L569.0 187.7L570.0 184.4L571.0 181.2L572.0 178.1L573.0 174.9L574.0 171.9L575.0 168.8L576.0 165.8L577.0 162.9L578.0 159.9L579.0 157.1L580.0 154.3L581.0 151.6L582.0 148.9L583.0 146.3L584.0 143.8L585.0 141.3L586.0 138.9L587.0 136.6L588.0 134.3L589.0 132.2L590.0 130.1L591.0 128.1L592.0 126.1L593.0 124.3L594.0 122.6L595.0 120.9L596.0 119.4L597.0 117.9L598.0 116.6L599.0 115.3L600.0 114.1L601.0 113.1L602.0 112.1L603.0 111.3L604.0 110.5L605.0 109.9L606.0 109.4L607.0 109.0L608.0 108.6L609.0 108.4L610.0 108.4L611.0 108.4L612.0 108.5L613.0 108.8L614.0 109.1L615.0 109.6L616.0 110.1L617.0 110.8L618.0 111.6L619.0 112.5L620.0 113.5L621.0 114.6L622.0 115.8L623.0 117.1L624.0 118.5L625.0 120.0L626.0 121.6L627.0 123.3L628.0 125.0L629.0 126.9L630.0 128.9L631.0 130.9L632.0 133.0L633.0 135.2L634.0 137.5L635.0 139.8L636.0 142.3L637.0 144.8L638.0 147.3L639.0 150.0L639.0 152.4L638.0 149.8L637.0 147.3L636.0 144.8L635.0 142.4L634.0 140.1L633.0 137.8L632.0 135.7L631.0 133.6L630.0 131.6L629.0 129.7L628.0 127.9L627.0 126.2L626.0 124.5L625.0 123.0L624.0 121.6L623.0 120.2L622.0 119.0L621.0 117.8L620.0 116.8L619.0 115.8L618.0 115.0L617.0 114.3L616.0 113.6L615.0 113.1L614.0 112.7L613.0 112.3L612.0 112.1L611.0 112.0L610.0 112.0L609.0 112.0L608.0 112.2L607.0 112.5L606.0 112.9L605.0 113.4L604.0 114.0L603.0 114.7L602.0 115.5L601.0 116.4L600.0 117.4L599.0 118.5L598.0 119.7L597.0 121.0L596.0 122.4L595.0 123.9L594.0 125.5L593.0 127.2L592.0 129.0L591.0 130.8L590.0 132.8L589.0 134.8L588.0 136.9L587.0 139.2L586.0 141.4L585.0 143.8L584.0 146.3L583.0 148.8L582.0 151.4L581.0 154.0L580.0 156.7L579.0 159.5L578.0 162.4L577.0 165.3L576.0 168.2L575.0 171.2L574.0 174.3L573.0 177.4L572.0 180.5L571.0 183.6L570.0 186.8L569.0 190.1L568.0 193.3L567.0 196.6L566.0 199.9L565.0 203.2L564.0 206.6L563.0 209.9L562.0 213.3L561.0 216.6L560.0 220.0L559.0 223.3L558.0 226.6L557.0 230.0L556.0 233.3L555.0 236.6L554.0 239.9L553.0 243.1L552.0 246.3L551.0 249.5L550.0 252.7L549.0 255.8L548.0 258.9L547.0 261.9L546.0 264.9L545.0 267.9L544.0 270.8L543.0 273.6L542.0 276.4L541.0 279.1L540.0 281.8L539.0 284.3L538.0 286.9L537.0 289.3L536.0 291.7L535.0 294.0L534.0 296.2L533.0 298.3L532.0 300.4L531.0 302.3L530.0 304.2L529.0 306.0L528.0 307.7L527.0 309.3L526.0 310.8L525.0 312.2L524.0 313.6L523.0 314.8L522.0 315.9L521.0 316.9L520.0 317.8L519.0 318.6L518.0 319.3L517.0 319.9L516.0 320.4L515.0 320.8L514.0 321.1L513.0 321.3L512.0 321.3L511.0 321.3L510.0 321.2L509.0 320.9L508.0 320.6L507.0 320.1L506.0 319.5L505.0 318.9L504.0 318.1L503.0 317.2L502.0 316.2L501.0 315.1L500.0 313.9L499.0 312.6L498.0 311.3L497.0 309.8L496.0 308.2L495.0 306.5L494.0 304.8L493.0 302.9L492.0 301.0L491.0 299.0L490.0 296.8L489.0 294.7L488.0 292.4L487.0 290.0L486.0 287.6L485.0 285.1L484.0 282.5L483.0 279.9L482.0 277.2L481.0 274.4L480.0 271.6L479.0 268.8L478.0 265.8L477.0 262.8L476.0 259.8L475.0 256.7L474.0 253.6L473.0 250.5L472.0 247.3L471.0 244.1L470.0 240.8L469.0 237.6L468.0 234.3L467.0 231.0L466.0 227.6L465.0 224.3L464.0 221.0L463.0 217.6L462.0 214.3L461.0 210.9L460.0 207.6L459.0 204.2L458.0 200.9L457.0 197.6L456.0 194.3L455.0 191.1L454.0 187.8L453.0 184.6L452.0 181.4L451.0 178.3L450.0 175.2L449.0 172.1L448.0 169.1L447.0 166.1L446.0 163.2L445.0 160.4L444.0 157.6L443.0 154.8L442.0 152.2L441.0 149.5L440.0 147.0L439.0 144.5L438.0 142.1L437.0 139.8L436.0 137.6L435.0 135.4L434.0 133.4L433.0 131.4L432.0 129.5L431.0 127.7L430.0 126.0L429.0 124.4L428.0 122.8L427.0 121.4L426.0 120.1L425.0 118.9L424.0 117.7L423.0 116.7L422.0 115.8L421.0 114.9L420.0 114.2L419.0 113.6L418.0 113.0L417.0 112.6L416.0 112.3L415.0 112.1L414.0 112.0L413.0 112.0L412.0 112.1L411.0 112.2L410.0 112.5L409.0 112.9L408.0 113.5L407.0 114.1L406.0 114.8L405.0 115.6L404.0 116.5L403.0 117.5L402.0 118.6L401.0 119.8L400.0 121.1L399.0 122.6L398.0 124.1L397.0 125.7L396.0 127.3L395.0 129.1L394.0 131.0L393.0 133.0L392.0 135.0L391.0 137.2L390.0 139.4L389.0 141.7L388.0 144.1L387.0 146.5L386.0 149.0L385.0 151.6L384.0 154.3L383.0 157.0L382.0 159.8L381.0 162.7L380.0 165.6L379.0 168.5L378.0 171.5L377.0 174.6L376.0 177.7L375.0 180.8L374.0 184.0L373.0 187.2L372.0 190.4L371.0 193.7L370.0 196.9L369.0 200.2L368.0 203.6L367.0 206.9L366.0 210.2L365.0 213.6L364.0 216.9L363.0 220.3L362.0 223.6L361.0 227.0L360.0 230.3L359.0 233.6L358.0 236.9L357.0 240.2L356.0 243.4L355.0 246.7L354.0 249.8L353.0 253.0L352.0 256.1L351.0 259.2L350.0 262.2L349.0 265.2L348.0 268.2L347.0 271.1L346.0 273.9L345.0 276.7L344.0 279.4L343.0 282.0L342.0 284.6L341.0 287.1L340.0 289.6L339.0 291.9L338.0 294.2L337.0 296.4L336.0 298.5L335.0 300.6L334.0 302.5L333.0 304.4L332.0 306.2L331.0 307.9L330.0 309.5L329.0 311.0L328.0 312.4L327.0 313.7L326.0 314.9L325.0 316.0L324.0 317.0L323.0 317.9L322.0 318.7L321.0 319.4L320.0 320.0L319.0 320.5L318.0 320.9L317.0 321.1L316.0 321.3L315.0 321.3L314.0 321.3L313.0 321.1L312.0 320.9L311.0 320.5L310.0 320.0L309.0 319.5L308.0 318.8L307.0 318.0L306.0 317.1L305.0 316.1L304.0 315.0L303.0 313.8L302.0 312.5L301.0 311.1L300.0 309.6L299.0 308.0L298.0 306.4L297.0 304.6L296.0 302.7L295.0 300.8L294.0 298.7L293.0 296.6L292.0 294.4L291.0 292.1L290.0 289.8L289.0 287.4L288.0 284.9L287.0 282.3L286.0 279.6L285.0 276.9L284.0 274.2L283.0 271.3L282.0 268.5L281.0 265.5L280.0 262.5L279.0 259.5L278.0 256.4L277.0 253.3L276.0 250.2L275.0 247.0L274.0 243.8L273.0 240.5L272.0 237.2L271.0 233.9L270.0 230.6L269.0 227.3L268.0 224.0L267.0 220.6L266.0 217.3L265.0 213.9L264.0 210.6L263.0 207.2L262.0 203.9L261.0 200.6L260.0 197.3L259.0 194.0L258.0 190.7L257.0 187.5L256.0 184.3L255.0 181.1L254.0 178.0L253.0 174.9L252.0 171.8L251.0 168.8L250.0 165.9L249.0 162.9L248.0 160.1L247.0 157.3L246.0 154.6L245.0 151.9L244.0 149.3L243.0 146.8L242.0 144.3L241.0 141.9L240.0 139.6L239.0 137.4L238.0 135.2L237.0 133.2L236.0 131.2L235.0 129.3L234.0 127.5L233.0 125.8L232.0 124.2L231.0 122.7L230.0 121.3L229.0 120.0L228.0 118.7L227.0 117.6L226.0 116.6L225.0 115.7L224.0 114.8L223.0 114.1L222.0 113.5L221.0 113.0L220.0 112.6L219.0 112.3L218.0 112.1L217.0 112.0L216.0 112.0L215.0 112.1L214.0 112.3L213.0 112.6L212.0 113.0L211.0 113.5L210.0 114.1L209.0 114.8L208.0 115.7L207.0 116.6L206.0 117.6L205.0 118.7L204.0 120.0L203.0 121.3L202.0 122.7L201.0 124.2L200.0 125.8L199.0 127.5L198.0 129.3L197.0 131.2L196.0 133.2L195.0 135.2L194.0 137.4L193.0 139.6L192.0 141.9L191.0 144.3L190.0 146.8L189.0 149.3L188.0 151.9L187.0 154.6L186.0 157.3L185.0 160.1L184.0 162.9L183.0 165.9L182.0 168.8L181.0 171.8L180.0 174.9L179.0 178.0L178.0 181.1L177.0 184.3L176.0 187.5L175.0 190.7L174.0 194.0L173.0 197.3L172.0 200.6L171.0 203.9L170.0 207.2L169.0 210.6L168.0 213.9L167.0 217.3L166.0 220.6L165.0 224.0L164.0 227.3L163.0 230.6L162.0 233.9L161.0 237.2L160.0 240.5L159.0 243.8L158.0 247.0L157.0 250.2L156.0 253.3L155.0 256.4L154.0 259.5L153.0 262.5L152.0 265.5L151.0 268.5L150.0 271.3L149.0 274.2L148.0 276.9L147.0 279.6L146.0 282.3L145.0 284.9L144.0 287.4L143.0 289.8L142.0 292.1L141.0 294.4L140.0 296.6L139.0 298.7L138.0 300.8L137.0 302.7L136.0 304.6L135.0 306.4L134.0 308.0L133.0 309.6L132.0 311.1L131.0 312.5L130.0 313.8L129.0 315.0L128.0 316.1L127.0 317.1L126.0 318.0L125.0 318.8L124.0 319.5L123.0 320.0L122.0 320.5L121.0 320.9L120.0 321.1L119.0 321.3L118.0 321.3L117.0 321.3L116.0 321.1L115.0 320.9L114.0 320.5L113.0 320.0L112.0 319.4L111.0 318.7L110.0 317.9L109.0 317.0L108.0 316.0L107.0 314.9L106.0 313.7L105.0 312.4L104.0 311.0L103.0 309.5L102.0 307.9L101.0 306.2L100.0 304.4L99.0 302.5L98.0 300.6L97.0 298.5L96.0 296.4L95.0 294.2L94.0 291.9L93.0 289.6L92.0 287.1L91.0 284.6L90.0 282.0L89.0 279.4L88.0 276.7L87.0 273.9L86.0 271.1L85.0 268.2L84.0 265.2L83.0 262.2L82.0 259.2L81.0 256.1L80.0 253.0L79.0 249.8L78.0 246.7L77.0 243.4L76.0 240.2L75.0 236.9L74.0 233.6L73.0 230.3L72.0 227.0L71.0 223.6L70.0 220.3L69.0 216.9L68.0 213.6L67.0 210.2L66.0 206.9L65.0 203.6L64.0 200.2L63.0 196.9L62.0 193.7L61.0 190.4L60.0 187.2L59.0 184.0L58.0 180.8L57.0 177.7L56.0 174.6L55.0 171.5L54.0 168.5L53.0 165.6L52.0 162.7L51.0 159.8L50.0 157.0L49.0 154.3L48.0 151.6L47.0 149.0L46.0 146.5L45.0 144.1L44.0 141.7L43.0 139.4L42.0 137.2L41.0 135.0L40.0 133.0L39.0 131.0L38.0 129.1L37.0 127.3L36.0 125.7L35.0 124.1L34.0 122.6L33.0 121.1L32.0 119.8L31.0 118.6L30.0 117.5L29.0 116.5L28.0 115.6L27.0 114.8L26.0 114.1L25.0 113.5L24.0 112.9L23.0 112.5L22.0 112.2L21.0 112.1L20.0 112.0L19.0 112.0L18.0 112.1L17.0 112.3L16.0 112.6L15.0 113.0L14.0 113.6L13.0 114.2L12.0 114.9Z" fill="#eded14" stroke="#eded14" stroke-width="0.7" stroke-linejoin="round"/>
<path d="M12.0 223.9L13.0 225.5L14.0 227.2L15.0 228.8L16.0 230.4L17.0 231.9L18.0 233.5L19.0 235.0L20.0 236.6L21.0 238.1L22.0 239.5L23.0 241.0L24.0 242.4L25.0 243.8L26.0 245.2L27.0 246.5L28.0 247.8L29.0 249.1L30.0 250.3L31.0 251.5L32.0 252.7L33.0 253.8L34.0 254.9L35.0 255.9L36.0 256.9L37.0 257.9L38.0 258.8L39.0 259.7L40.0 260.5L41.0 261.3L42.0 262.0L43.0 262.7L44.0 263.3L45.0 263.9L46.0 264.4L47.0 264.9L48.0 265.3L49.0 265.7L50.0 266.0L51.0 266.3L52.0 266.6L53.0 266.7L54.0 266.9L55.0 266.9L56.0 266.9L57.0 266.9L58.0 266.8L59.0 266.7L60.0 266.5L61.0 266.3L62.0 266.0L63.0 265.6L64.0 265.2L65.0 264.8L66.0 264.3L67.0 263.8L68.0 263.2L69.0 262.5L70.0 261.8L71.0 261.1L72.0 260.3L73.0 259.5L74.0 258.6L75.0 257.7L76.0 256.7L77.0 255.7L78.0 254.7L79.0 253.6L80.0 252.4L81.0 251.3L82.0 250.1L83.0 248.8L84.0 247.6L85.0 246.3L86.0 244.9L87.0 243.5L88.0 242.1L89.0 240.7L90.0 239.2L91.0 237.8L92.0 236.3L93.0 234.7L94.0 233.2L95.0 231.6L96.0 230.0L97.0 228.4L98.0 226.8L99.0 225.2L100.0 223.6L101.0 221.9L102.0 220.3L103.0 218.6L104.0 217.0L105.0 215.3L106.0 213.7L107.0 212.0L108.0 210.3L109.0 208.7L110.0 207.0L111.0 205.4L112.0 203.8L113.0 202.2L114.0 200.6L115.0 199.0L116.0 197.4L117.0 195.9L118.0 194.3L119.0 192.8L120.0 191.3L121.0 189.9L122.0 188.4L123.0 187.0L124.0 185.6L125.0 184.3L126.0 182.9L127.0 181.6L128.0 180.4L129.0 179.2L130.0 178.0L131.0 176.8L132.0 175.7L133.0 174.6L134.0 173.6L135.0 172.6L136.0 171.7L137.0 170.8L138.0 169.9L139.0 169.1L140.0 168.3L141.0 167.6L142.0 167.0L143.0 166.3L144.0 165.8L145.0 165.3L146.0 164.8L147.0 164.4L148.0 164.0L149.0 163.7L150.0 163.4L151.0 163.2L152.0 163.1L153.0 163.0L154.0 163.0L155.0 163.0L156.0 163.0L157.0 163.1L158.0 163.3L159.0 163.5L160.0 163.8L161.0 164.2L162.0 164.5L163.0 165.0L164.0 165.5L165.0 166.0L166.0 166.6L167.0 167.2L168.0 167.9L169.0 168.6L170.0 169.4L171.0 170.3L172.0 171.1L173.0 172.1L174.0 173.0L175.0 174.0L176.0 175.1L177.0 176.2L178.0 177.3L179.0 178.4L180.0 179.7L181.0 180.9L182.0 182.2L183.0 183.5L184.0 184.8L185.0 186.2L186.0 187.6L187.0 189.0L188.0 190.4L189.0 191.9L190.0 193.4L191.0 194.9L192.0 196.5L193.0 198.0L194.0 199.6L195.0 201.2L196.0 202.8L197.0 204.4L198.0 206.1L199.0 207.7L200.0 209.4L201.0 211.0L202.0 212.7L203.0 214.3L204.0 216.0L205.0 217.6L206.0 219.3L207.0 220.9L208.0 222.6L209.0 224.2L210.0 225.9L211.0 227.5L212.0 229.1L213.0 230.7L214.0 232.3L215.0 233.8L216.0 235.4L217.0 236.9L218.0 238.4L219.0 239.8L220.0 241.3L221.0 242.7L222.0 244.1L223.0 245.4L224.0 246.8L225.0 248.1L226.0 249.3L227.0 250.6L228.0 251.8L229.0 252.9L230.0 254.0L231.0 255.1L232.0 256.1L233.0 257.1L234.0 258.1L235.0 259.0L236.0 259.8L237.0 260.6L238.0 261.4L239.0 262.1L240.0 262.8L241.0 263.4L242.0 264.0L243.0 264.5L244.0 265.0L245.0 265.4L246.0 265.8L247.0 266.1L248.0 266.4L249.0 266.6L250.0 266.8L251.0 266.9L252.0 266.9L253.0 266.9L254.0 266.9L255.0 266.8L256.0 266.7L257.0 266.5L258.0 266.2L259.0 265.9L260.0 265.6L261.0 265.2L262.0 264.7L263.0 264.2L264.0 263.6L265.0 263.0L266.0 262.4L267.0 261.7L268.0 260.9L269.0 260.2L270.0 259.3L271.0 258.4L272.0 257.5L273.0 256.5L274.0 255.5L275.0 254.5L276.0 253.4L277.0 252.2L278.0 251.0L279.0 249.8L280.0 248.6L281.0 247.3L282.0 246.0L283.0 244.6L284.0 243.3L285.0 241.9L286.0 240.4L287.0 239.0L288.0 237.5L289.0 236.0L290.0 234.4L291.0 232.9L292.0 231.3L293.0 229.7L294.0 228.1L295.0 226.5L296.0 224.9L297.0 223.3L298.0 221.6L299.0 220.0L300.0 218.3L301.0 216.6L302.0 215.0L303.0 213.3L304.0 211.7L305.0 210.0L306.0 208.4L307.0 206.7L308.0 205.1L309.0 203.5L310.0 201.9L311.0 200.3L312.0 198.7L313.0 197.1L314.0 195.6L315.0 194.0L316.0 192.5L317.0 191.0L318.0 189.6L319.0 188.1L320.0 186.7L321.0 185.3L322.0 184.0L323.0 182.7L324.0 181.4L325.0 180.1L326.0 178.9L327.0 177.7L328.0 176.6L329.0 175.5L330.0 174.4L331.0 173.4L332.0 172.4L333.0 171.5L334.0 170.6L335.0 169.8L336.0 169.0L337.0 168.2L338.0 167.5L339.0 166.8L340.0 166.2L341.0 165.7L342.0 165.2L343.0 164.7L344.0 164.3L345.0 163.9L346.0 163.6L347.0 163.4L348.0 163.2L349.0 163.1L350.0 163.0L351.0 163.0L352.0 163.0L353.0 163.0L354.0 163.2L355.0 163.4L356.0 163.6L357.0 163.9L358.0 164.2L359.0 164.6L360.0 165.1L361.0 165.6L362.0 166.1L363.0 166.7L364.0 167.4L365.0 168.1L366.0 168.8L367.0 169.6L368.0 170.4L369.0 171.3L370.0 172.2L371.0 173.2L372.0 174.2L373.0 175.3L374.0 176.4L375.0 177.5L376.0 178.7L377.0 179.9L378.0 181.1L379.0 182.4L380.0 183.7L381.0 185.1L382.0 186.4L383.0 187.9L384.0 189.3L385.0 190.7L386.0 192.2L387.0 193.7L388.0 195.2L389.0 196.8L390.0 198.4L391.0 199.9L392.0 201.5L393.0 203.1L394.0 204.8L395.0 206.4L396.0 208.0L397.0 209.7L398.0 211.3L399.0 213.0L400.0 214.7L401.0 216.3L402.0 218.0L403.0 219.6L404.0 221.3L405.0 222.9L406.0 224.6L407.0 226.2L408.0 227.8L409.0 229.4L410.0 231.0L411.0 232.6L412.0 234.1L413.0 235.7L414.0 237.2L415.0 238.7L416.0 240.1L417.0 241.6L418.0 243.0L419.0 244.4L420.0 245.7L421.0 247.0L422.0 248.3L423.0 249.6L424.0 250.8L425.0 252.0L426.0 253.1L427.0 254.2L428.0 255.3L429.0 256.3L430.0 257.3L431.0 258.2L432.0 259.1L433.0 260.0L434.0 260.8L435.0 261.5L436.0 262.3L437.0 262.9L438.0 263.5L439.0 264.1L440.0 264.6L441.0 265.1L442.0 265.5L443.0 265.9L444.0 266.2L445.0 266.4L446.0 266.6L447.0 266.8L448.0 266.9L449.0 266.9L450.0 266.9L451.0 266.9L452.0 266.8L453.0 266.6L454.0 266.4L455.0 266.2L456.0 265.9L457.0 265.5L458.0 265.1L459.0 264.6L460.0 264.1L461.0 263.5L462.0 262.9L463.0 262.3L464.0 261.5L465.0 260.8L466.0 260.0L467.0 259.1L468.0 258.2L469.0 257.3L470.0 256.3L471.0 255.3L472.0 254.2L473.0 253.1L474.0 252.0L475.0 250.8L476.0 249.6L477.0 248.3L478.0 247.0L479.0 245.7L480.0 244.4L481.0 243.0L482.0 241.6L483.0 240.1L484.0 238.7L485.0 237.2L486.0 235.7L487.0 234.1L488.0 232.6L489.0 231.0L490.0 229.4L491.0 227.8L492.0 226.2L493.0 224.6L494.0 222.9L495.0 221.3L496.0 219.6L497.0 218.0L498.0 216.3L499.0 214.7L500.0 213.0L501.0 211.3L502.0 209.7L503.0 208.0L504.0 206.4L505.0 204.8L506.0 203.1L507.0 201.5L508.0 199.9L509.0 198.4L510.0 196.8L511.0 195.2L512.0 193.7L513.0 192.2L514.0 190.7L515.0 189.3L516.0 187.9L517.0 186.4L518.0 185.1L519.0 183.7L520.0 182.4L521.0 181.1L522.0 179.9L523.0 178.7L524.0 177.5L525.0 176.4L526.0 175.3L527.0 174.2L528.0 173.2L529.0 172.2L530.0 171.3L531.0 170.4L532.0 169.6L533.0 168.8L534.0 168.1L535.0 167.4L536.0 166.7L537.0 166.1L538.0 165.6L539.0 165.1L540.0 164.6L541.0 164.2L542.0 163.9L543.0 163.6L544.0 163.4L545.0 163.2L546.0 163.0L547.0 163.0L548.0 163.0L549.0 163.0L550.0 163.1L551.0 163.2L552.0 163.4L553.0 163.6L554.0 163.9L555.0 164.3L556.0 164.7L557.0 165.2L558.0 165.7L559.0 166.2L560.0 166.8L561.0 167.5L562.0 168.2L563.0 169.0L564.0 169.8L565.0 170.6L566.0 171.5L567.0 172.4L568.0 173.4L569.0 174.4L570.0 175.5L571.0 176.6L572.0 177.7L573.0 178.9L574.0 180.1L575.0 181.4L576.0 182.7L577.0 184.0L578.0 185.3L579.0 186.7L580.0 188.1L581.0 189.6L582.0 191.0L583.0 192.5L584.0 194.0L585.0 195.6L586.0 197.1L587.0 198.7L588.0 200.3L589.0 201.9L590.0 203.5L591.0 205.1L592.0 206.7L593.0 208.4L594.0 210.0L595.0 211.7L596.0 213.3L597.0 215.0L598.0 216.6L599.0 218.3L600.0 220.0L601.0 221.6L602.0 223.3L603.0 224.9L604.0 226.5L605.0 228.1L606.0 229.7L607.0 231.3L608.0 232.9L609.0 234.4L610.0 236.0L611.0 237.5L612.0 239.0L613.0 240.4L614.0 241.9L615.0 243.3L616.0 244.6L617.0 246.0L618.0 247.3L619.0 248.6L620.0 249.8L621.0 251.0L622.0 252.2L623.0 253.4L624.0 254.5L625.0 255.5L626.0 256.5L627.0 257.5L628.0 258.4L629.0 259.3L630.0 260.2L631.0 260.9L632.0 261.7L633.0 262.4L634.0 263.0L635.0 263.6L636.0 264.2L637.0 264.7L638.0 265.2L639.0 265.6L639.0 269.0L638.0 268.6L637.0 268.1L636.0 267.6L635.0 267.1L634.0 266.4L633.0 265.8L632.0 265.1L631.0 264.3L630.0 263.5L629.0 262.6L628.0 261.7L627.0 260.8L626.0 259.8L625.0 258.8L624.0 257.7L623.0 256.6L622.0 255.4L621.0 254.2L620.0 253.0L619.0 251.8L618.0 250.5L617.0 249.1L616.0 247.8L615.0 246.4L614.0 245.0L613.0 243.5L612.0 242.1L611.0 240.6L610.0 239.1L609.0 237.5L608.0 236.0L607.0 234.4L606.0 232.8L605.0 231.2L604.0 229.6L603.0 228.0L602.0 226.4L601.0 224.7L600.0 223.1L599.0 221.4L598.0 219.7L597.0 218.1L596.0 216.4L595.0 214.8L594.0 213.1L593.0 211.5L592.0 209.8L591.0 208.2L590.0 206.6L589.0 205.0L588.0 203.4L587.0 201.8L586.0 200.2L585.0 198.7L584.0 197.1L583.0 195.6L582.0 194.2L581.0 192.7L580.0 191.3L579.0 189.9L578.0 188.5L577.0 187.1L576.0 185.8L575.0 184.6L574.0 183.3L573.0 182.1L572.0 181.0L571.0 179.8L570.0 178.7L569.0 177.7L568.0 176.7L567.0 175.7L566.0 174.8L565.0 173.9L564.0 173.1L563.0 172.3L562.0 171.6L561.0 170.9L560.0 170.2L559.0 169.6L558.0 169.1L557.0 168.6L556.0 168.2L555.0 167.8L554.0 167.4L553.0 167.1L552.0 166.9L551.0 166.7L550.0 166.6L549.0 166.5L548.0 166.5L547.0 166.5L546.0 166.5L545.0 166.7L544.0 166.8L543.0 167.1L542.0 167.4L541.0 167.7L540.0 168.1L539.0 168.5L538.0 169.0L537.0 169.5L536.0 170.1L535.0 170.7L534.0 171.4L533.0 172.1L532.0 172.9L531.0 173.7L530.0 174.6L529.0 175.5L528.0 176.5L527.0 177.5L526.0 178.5L525.0 179.6L524.0 180.7L523.0 181.9L522.0 183.1L521.0 184.3L520.0 185.6L519.0 186.9L518.0 188.2L517.0 189.6L516.0 191.0L515.0 192.4L514.0 193.9L513.0 195.3L512.0 196.8L511.0 198.4L510.0 199.9L509.0 201.5L508.0 203.0L507.0 204.6L506.0 206.2L505.0 207.9L504.0 209.5L503.0 211.1L502.0 212.8L501.0 214.4L500.0 216.1L499.0 217.8L498.0 219.4L497.0 221.1L496.0 222.7L495.0 224.4L494.0 226.0L493.0 227.7L492.0 229.3L491.0 230.9L490.0 232.5L489.0 234.1L488.0 235.7L487.0 237.2L486.0 238.8L485.0 240.3L484.0 241.8L483.0 243.2L482.0 244.7L481.0 246.1L480.0 247.5L479.0 248.9L478.0 250.2L477.0 251.5L476.0 252.8L475.0 254.0L474.0 255.2L473.0 256.3L472.0 257.5L471.0 258.5L470.0 259.6L469.0 260.6L468.0 261.5L467.0 262.4L466.0 263.3L465.0 264.1L464.0 264.9L463.0 265.6L462.0 266.3L461.0 266.9L460.0 267.5L459.0 268.0L458.0 268.5L457.0 268.9L456.0 269.3L455.0 269.6L454.0 269.9L453.0 270.1L452.0 270.3L451.0 270.4L450.0 270.4L449.0 270.4L448.0 270.4L447.0 270.3L446.0 270.1L445.0 269.9L444.0 269.6L443.0 269.3L442.0 268.9L441.0 268.5L440.0 268.0L439.0 267.5L438.0 266.9L437.0 266.3L436.0 265.6L435.0 264.9L434.0 264.1L433.0 263.3L432.0 262.4L431.0 261.5L430.0 260.6L429.0 259.6L428.0 258.5L427.0 257.5L426.0 256.3L425.0 255.2L424.0 254.0L423.0 252.8L422.0 251.5L421.0 250.2L420.0 248.9L419.0 247.5L418.0 246.1L417.0 244.7L416.0 243.2L415.0 241.8L414.0 240.3L413.0 238.8L412.0 237.2L411.0 235.7L410.0 234.1L409.0 232.5L408.0 230.9L407.0 229.3L406.0 227.7L405.0 226.0L404.0 224.4L403.0 222.7L402.0 221.1L401.0 219.4L400.0 217.8L399.0 216.1L398.0 214.4L397.0 212.8L396.0 211.1L395.0 209.5L394.0 207.9L393.0 206.2L392.0 204.6L391.0 203.0L390.0 201.5L389.0 199.9L388.0 198.4L387.0 196.8L386.0 195.3L385.0 193.9L384.0 192.4L383.0 191.0L382.0 189.6L381.0 188.2L380.0 186.9L379.0 185.6L378.0 184.3L377.0 183.1L376.0 181.9L375.0 180.7L374.0 179.6L373.0 178.5L372.0 177.5L371.0 176.5L370.0 175.5L369.0 174.6L368.0 173.7L367.0 172.9L366.0 172.1L365.0 171.4L364.0 170.7L363.0 170.1L362.0 169.5L361.0 169.0L360.0 168.5L359.0 168.1L358.0 167.7L357.0 167.4L356.0 167.1L355.0 166.8L354.0 166.7L353.0 166.5L352.0 166.5L351.0 166.5L350.0 166.5L349.0 166.6L348.0 166.7L347.0 166.9L346.0 167.1L345.0 167.4L344.0 167.8L343.0 168.2L342.0 168.6L341.0 169.1L340.0 169.6L339.0 170.2L338.0 170.9L337.0 171.6L336.0 172.3L335.0 173.1L334.0 173.9L333.0 174.8L332.0 175.7L331.0 176.7L330.0 177.7L329.0 178.7L328.0 179.8L327.0 181.0L326.0 182.1L325.0 183.3L324.0 184.6L323.0 185.8L322.0 187.1L321.0 188.5L320.0 189.9L319.0 191.3L318.0 192.7L317.0 194.2L316.0 195.6L315.0 197.1L314.0 198.7L313.0 200.2L312.0 201.8L311.0 203.4L310.0 205.0L309.0 206.6L308.0 208.2L307.0 209.8L306.0 211.5L305.0 213.1L304.0 214.8L303.0 216.4L302.0 218.1L301.0 219.7L300.0 221.4L299.0 223.1L298.0 224.7L297.0 226.4L296.0 228.0L295.0 229.6L294.0 231.2L293.0 232.8L292.0 234.4L291.0 236.0L290.0 237.5L289.0 239.1L288.0 240.6L287.0 242.1L286.0 243.5L285.0 245.0L284.0 246.4L283.0 247.8L282.0 249.1L281.0 250.5L280.0 251.8L279.0 253.0L278.0 254.2L277.0 255.4L276.0 256.6L275.0 257.7L274.0 258.8L273.0 259.8L272.0 260.8L271.0 261.7L270.0 262.6L269.0 263.5L268.0 264.3L267.0 265.1L266.0 265.8L265.0 266.4L264.0 267.1L263.0 267.6L262.0 268.1L261.0 268.6L260.0 269.0L259.0 269.4L258.0 269.7L257.0 270.0L256.0 270.2L255.0 270.3L254.0 270.4L253.0 270.4L252.0 270.4L251.0 270.4L250.0 270.3L249.0 270.1L248.0 269.9L247.0 269.6L246.0 269.2L245.0 268.9L244.0 268.4L243.0 267.9L242.0 267.4L241.0 266.8L240.0 266.2L239.0 265.5L238.0 264.8L237.0 264.0L236.0 263.1L235.0 262.3L234.0 261.3L233.0 260.4L232.0 259.4L231.0 258.3L230.0 257.2L229.0 256.1L228.0 255.0L227.0 253.7L226.0 252.5L225.0 251.2L224.0 249.9L223.0 248.6L222.0 247.2L221.0 245.8L220.0 244.4L219.0 243.0L218.0 241.5L217.0 240.0L216.0 238.5L215.0 236.9L214.0 235.4L213.0 233.8L212.0 232.2L211.0 230.6L210.0 229.0L209.0 227.3L208.0 225.7L207.0 224.0L206.0 222.4L205.0 220.7L204.0 219.1L203.0 217.4L202.0 215.8L201.0 214.1L200.0 212.5L199.0 210.8L198.0 209.2L197.0 207.5L196.0 205.9L195.0 204.3L194.0 202.7L193.0 201.1L192.0 199.6L191.0 198.0L190.0 196.5L189.0 195.0L188.0 193.6L187.0 192.1L186.0 190.7L185.0 189.3L184.0 188.0L183.0 186.6L182.0 185.3L181.0 184.1L180.0 182.8L179.0 181.6L178.0 180.5L177.0 179.4L176.0 178.3L175.0 177.3L174.0 176.3L173.0 175.3L172.0 174.4L171.0 173.6L170.0 172.8L169.0 172.0L168.0 171.3L167.0 170.6L166.0 170.0L165.0 169.4L164.0 168.9L163.0 168.4L162.0 168.0L161.0 167.6L160.0 167.3L159.0 167.0L158.0 166.8L157.0 166.6L156.0 166.5L155.0 166.5L154.0 166.5L153.0 166.5L152.0 166.6L151.0 166.7L150.0 166.9L149.0 167.2L148.0 167.5L147.0 167.8L146.0 168.2L145.0 168.7L144.0 169.2L143.0 169.8L142.0 170.4L141.0 171.0L140.0 171.7L139.0 172.5L138.0 173.2L137.0 174.1L136.0 175.0L135.0 175.9L134.0 176.9L133.0 177.9L132.0 178.9L131.0 180.0L130.0 181.2L129.0 182.4L128.0 183.6L127.0 184.8L126.0 186.1L125.0 187.4L124.0 188.8L123.0 190.1L122.0 191.5L121.0 193.0L120.0 194.4L119.0 195.9L118.0 197.4L117.0 199.0L116.0 200.5L115.0 202.1L114.0 203.7L113.0 205.3L112.0 206.9L111.0 208.5L110.0 210.1L109.0 211.8L108.0 213.4L107.0 215.1L106.0 216.8L105.0 218.4L104.0 220.1L103.0 221.7L102.0 223.4L101.0 225.0L100.0 226.7L99.0 228.3L98.0 229.9L97.0 231.5L96.0 233.1L95.0 234.7L94.0 236.3L93.0 237.8L92.0 239.4L91.0 240.9L90.0 242.4L89.0 243.8L88.0 245.3L87.0 246.7L86.0 248.1L85.0 249.4L84.0 250.7L83.0 252.0L82.0 253.3L81.0 254.5L80.0 255.7L79.0 256.8L78.0 257.9L77.0 259.0L76.0 260.0L75.0 261.0L74.0 261.9L73.0 262.8L72.0 263.6L71.0 264.4L70.0 265.2L69.0 265.9L68.0 266.6L67.0 267.2L66.0 267.7L65.0 268.2L64.0 268.7L63.0 269.1L62.0 269.5L61.0 269.8L60.0 270.0L59.0 270.2L58.0 270.3L57.0 270.4L56.0 270.4L55.0 270.4L54.0 270.4L53.0 270.2L52.0 270.0L51.0 269.8L50.0 269.5L49.0 269.2L48.0 268.8L47.0 268.3L46.0 267.8L45.0 267.3L44.0 266.7L43.0 266.0L42.0 265.3L41.0 264.6L40.0 263.8L39.0 263.0L38.0 262.1L37.0 261.2L36.0 260.2L35.0 259.2L34.0 258.1L33.0 257.0L32.0 255.9L31.0 254.7L30.0 253.5L29.0 252.3L28.0 251.0L27.0 249.7L26.0 248.3L25.0 247.0L24.0 245.5L23.0 244.1L22.0 242.7L21.0 241.2L20.0 239.7L19.0 238.2L18.0 236.6L17.0 235.0L16.0 233.5L15.0 231.9L14.0 230.3L13.0 228.6L12.0 227.0Z" fill="#12e2e2" stroke="#12e2e2" stroke-width="0.3" stroke-linejoin="round"/>
</g>
<path d="M13.4 19.1 L17 15 H24 V23.3 H17 Z" fill="#ff9a0a"/>
<text x="17.6" y="22.4" fill="#1a0818" stroke="#1a0818" stroke-width="0.3" style="font-size:8.8px" textLength="5.2" lengthAdjust="spacingAndGlyphs">T</text>
<path d="M76.5 6.3 L80 2.8 H84 V10 H80 Z" fill="#ff9a0a"/>
<rect x="81" y="4" width="1.4" height="5" fill="#3a1500"/>
<rect x="177" y="5" width="296" height="1.2" fill="#1d9e8e"/>
<path d="M177.6 1.4 H176.5 V9.6 H177.6" fill="none" stroke="#aaa6a6" stroke-width="0.9"/>
<path d="M473 1.4 H474.1 V9.6 H473" fill="none" stroke="#aaa6a6" stroke-width="0.9"/>
<path d="M323.5 0 H328.5 L326 3 Z" fill="#ff9a0a"/>
<path d="M321.5 10.5 H329.5 L325.5 14.5 Z" fill="#ff9a0a"/>
<path d="M631 189.5 L635 186 V193 Z" fill="#eded14"/><rect x="634" y="189" width="4" height="1" fill="#eded14"/>
<path d="M-1 209.4 H8.3 L12.2 214.6 L8.3 220 H-1 Z" fill="#12e2e2" stroke="#b8f4f4" stroke-width="0.7"/>
<path d="M1.5 209.3 H7.5" stroke="#d6d860" stroke-width="0.8"/>
<text x="2.2" y="218.6" fill="#04101c" stroke="#04101c" stroke-width="0.3" style="font-size:9.6px" textLength="5" lengthAdjust="spacingAndGlyphs">2</text>
<text x="0.1" y="8.6" fill="#4d0f98" stroke="#4d0f98" stroke-width="0.5" style="font-size:10.5px" textLength="18" lengthAdjust="spacingAndGlyphs">Tek</text>
<text x="21.7" y="7.7" fill="#f4f4f4" stroke="#f4f4f4" stroke-width="0.35" style="font-size:9.4px" textLength="19.2" lengthAdjust="spacingAndGlyphs">Run</text>
<text x="578.7" y="7.8" fill="#f4f4f4" stroke="#f4f4f4" stroke-width="0.3" style="font-size:10px" textLength="28.2" lengthAdjust="spacingAndGlyphs">Trig'd</text>
<rect x="13.5" y="385.5" width="346.0" height="12.0" rx="4" fill="#0b0903" stroke="#969696" stroke-width="1.2"/>
<rect x="15.7" y="387.1" width="16.4" height="9.5" rx="4.8" fill="#eded14"/>
<text x="23.9" y="395.3" fill="#000" text-anchor="middle" stroke="#000" stroke-width="0.3" style="font-size:9.7px">1</text>
<text x="42.8" y="395.2" fill="#eded14" textLength="31.0" lengthAdjust="spacing">2.00 V</text>
<text x="89.7" y="392.3" fill="#bcbc1c" style="font-size:5.8px">B</text>
<text x="92.2" y="394.9" fill="#bcbc1c" style="font-size:6.2px">w</text>
<rect x="103.0" y="387.1" width="15.8" height="9.5" rx="4.8" fill="#12e2e2"/>
<text x="110.9" y="395.3" fill="#000" text-anchor="middle" stroke="#000" stroke-width="0.3" style="font-size:9.7px">2</text>
<text x="130.0" y="395.2" fill="#12e2e2" textLength="31.3" lengthAdjust="spacing">2.00 V</text>
<text x="176.2" y="392.3" fill="#1fb0a8" style="font-size:5.8px">B</text>
<text x="178.7" y="394.9" fill="#1fb0a8" style="font-size:6.2px">w</text>
<rect x="13.5" y="399.7" width="346.0" height="44.8" rx="4" fill="#0b0903" stroke="#969696" stroke-width="1.2"/>
<text x="98.4" y="408.6" fill="#ececec" textLength="27.0" lengthAdjust="spacing">Value</text>
<text x="153.8" y="408.6" fill="#ececec" textLength="26.2" lengthAdjust="spacing">Mean</text>
<text x="205.8" y="408.6" fill="#ececec" textLength="18.2" lengthAdjust="spacing">Min</text>
<text x="257.3" y="408.6" fill="#ececec" textLength="18.8" lengthAdjust="spacing">Max</text>
<text x="307.8" y="408.6" fill="#ececec" textLength="38.0" lengthAdjust="spacing">Std Dev</text>
<rect x="15.7" y="412.3" width="16.4" height="9.6" rx="4.8" fill="#eded14"/>
<text x="23.9" y="420.5" fill="#000" text-anchor="middle" stroke="#000" stroke-width="0.3" style="font-size:9.7px">1</text>
<text x="37.7" y="419.9" fill="#eded14" textLength="21.5" lengthAdjust="spacing">Freq</text>
<text x="98.6" y="419.9" fill="#eded14" textLength="47.6" lengthAdjust="spacing">7.916kHz</text>
<text x="153.8" y="419.9" fill="#eded14" textLength="34.2" lengthAdjust="spacing">7.836k</text>
<text x="204.9" y="419.9" fill="#eded14" textLength="33.6" lengthAdjust="spacing">5.482k</text>
<text x="257.3" y="419.9" fill="#eded14" textLength="35.8" lengthAdjust="spacing">14.29M</text>
<text x="308.1" y="419.9" fill="#eded14" textLength="33.2" lengthAdjust="spacing">18.10k</text>
<rect x="15.7" y="423.5" width="16.4" height="9.6" rx="4.8" fill="#eded14"/>
<text x="23.9" y="431.8" fill="#000" text-anchor="middle" stroke="#000" stroke-width="0.3" style="font-size:9.7px">1</text>
<text x="37.7" y="431.1" fill="#eded14" textLength="26.0" lengthAdjust="spacing">Ampl</text>
<text x="98.6" y="431.1" fill="#eded14" textLength="31.0" lengthAdjust="spacing">10.2 V</text>
<text x="153.8" y="431.1" fill="#eded14" textLength="20.5" lengthAdjust="spacing">10.2</text>
<text x="204.9" y="431.1" fill="#eded14" textLength="26.5" lengthAdjust="spacing">320m</text>
<text x="257.3" y="431.1" fill="#eded14" textLength="20.0" lengthAdjust="spacing">11.6</text>
<text x="308.1" y="431.1" fill="#eded14" textLength="26.6" lengthAdjust="spacing">143m</text>
<rect x="15.7" y="434.7" width="16.4" height="9.6" rx="4.8" fill="#12e2e2"/>
<text x="23.9" y="442.9" fill="#000" text-anchor="middle" stroke="#000" stroke-width="0.3" style="font-size:9.7px">2</text>
<text x="37.7" y="442.3" fill="#12e2e2" textLength="26.0" lengthAdjust="spacing">Ampl</text>
<text x="98.6" y="442.3" fill="#12e2e2" textLength="31.3" lengthAdjust="spacing">5.04 V</text>
<text x="153.8" y="442.3" fill="#12e2e2" textLength="21.4" lengthAdjust="spacing">5.24</text>
<text x="204.9" y="442.3" fill="#12e2e2" textLength="26.5" lengthAdjust="spacing">320m</text>
<text x="257.3" y="442.3" fill="#12e2e2" textLength="20.8" lengthAdjust="spacing">8.40</text>
<text x="308.1" y="442.3" fill="#12e2e2" textLength="27.0" lengthAdjust="spacing">229m</text>
<rect x="366.4" y="419.2" width="90.6" height="22.7" rx="4" fill="#0b0903" stroke="#9ca2b6" stroke-width="1.2"/>
<text x="368.7" y="428.9" fill="#ececec" textLength="34.3" lengthAdjust="spacing">40.0µs</text>
<rect x="368.1" y="431.8" width="7.8" height="8.2" rx="1.2" fill="#ff9a0a"/>
<text x="369.6" y="439.3" fill="#1a0a00" style="font-size:8.6px" textLength="4.8" lengthAdjust="spacing">T</text>
<path d="M376.3 436.1 H379.4" stroke="#c87808" stroke-width="1" fill="none"/><path d="M378.9 434.3 L381.6 436.1 L378.9 437.9 Z" fill="#e88c08"/>
<path d="M382.6 433.6 H389.8 L386.2 437.6 Z" fill="#ff9a0a"/>
<text x="394.0" y="439.5" fill="#ff9a0a" textLength="50.8" lengthAdjust="spacing">600.000µs</text>
<rect x="463.8" y="419.2" width="65.8" height="22.7" rx="4" fill="#0b0903" stroke="#9ca2b6" stroke-width="1.2"/>
<text x="467.6" y="429.2" fill="#ececec" textLength="46.4" lengthAdjust="spacing">25.0MS/s</text>
<text x="467.6" y="439.3" fill="#ececec" textLength="52.6" lengthAdjust="spacing">10k points</text>
<rect x="536.2" y="419.2" width="102.0" height="22.6" rx="4" fill="#0b0903" stroke="#9ca2b6" stroke-width="1.2"/>
<rect x="555.6" y="420.9" width="15.7" height="9.7" rx="4.9" fill="#eded14"/>
<text x="563.5" y="429.2" fill="#000" text-anchor="middle" stroke="#000" stroke-width="0.3" style="font-size:9.7px">1</text>
<path d="M579.8 428.5 H582.2 L584.5 422.4 H587" stroke="#ececec" stroke-width="1.2" fill="none"/>
<text x="602.5" y="428.9" fill="#ececec" textLength="30.5" lengthAdjust="spacing">1.24 V</text>
<rect x="568.8" y="455.8" width="70.0" height="22.4" rx="4" fill="#0b0903" stroke="#a0a4b4" stroke-width="1.2"/>
<text x="572.9" y="465.7" fill="#ececec" textLength="29.7" lengthAdjust="spacing">17 Jan</text>
<text x="612.1" y="465.7" fill="#ececec" textLength="23.2" lengthAdjust="spacing">2008</text>
<text x="572.9" y="475.9" fill="#ececec" textLength="43.1" lengthAdjust="spacing">21:41:32</text>
<rect x="13.4" y="446" width="70.4" height="33.4" rx="3.5" fill="#171d4e"/>
<rect x="12.6" y="445.4" width="69.8" height="33" rx="3.5" fill="#80acf2"/>
<rect x="13.6" y="446.4" width="69.0" height="31.9" rx="3" fill="#5487e3"/>
<rect x="86.8" y="446" width="71.2" height="33.4" rx="3.5" fill="#171d4e"/>
<rect x="86.0" y="445.4" width="70.6" height="33" rx="3.5" fill="#80acf2"/>
<rect x="87.0" y="446.4" width="69.8" height="31.9" rx="3" fill="#5487e3"/>
<rect x="161.1" y="446" width="70.7" height="33.4" rx="3.5" fill="#171d4e"/>
<rect x="160.3" y="445.4" width="70.1" height="33" rx="3.5" fill="#80acf2"/>
<rect x="161.3" y="446.4" width="69.3" height="31.9" rx="3" fill="#5487e3"/>
<rect x="235.3" y="446" width="70.4" height="33.4" rx="3.5" fill="#171d4e"/>
<rect x="234.5" y="445.4" width="69.8" height="33" rx="3.5" fill="#80acf2"/>
<rect x="235.5" y="446.4" width="69.0" height="31.9" rx="3" fill="#5487e3"/>
<rect x="308.6" y="446" width="70.6" height="33.4" rx="3.5" fill="#171d4e"/>
<rect x="307.8" y="445.4" width="70.0" height="33" rx="3.5" fill="#80acf2"/>
<rect x="308.8" y="446.4" width="69.2" height="31.9" rx="3" fill="#5487e3"/>
<rect x="381.9" y="446" width="71.2" height="33.4" rx="3.5" fill="#171d4e"/>
<rect x="381.1" y="445.4" width="70.6" height="33" rx="3.5" fill="#80acf2"/>
<rect x="382.1" y="446.4" width="69.8" height="31.9" rx="3" fill="#5487e3"/>
<rect x="456.0" y="446" width="71.2" height="33.4" rx="3.5" fill="#171d4e"/>
<rect x="455.2" y="445.4" width="70.6" height="33" rx="3.5" fill="#80acf2"/>
<rect x="456.2" y="446.4" width="69.8" height="31.9" rx="3" fill="#5487e3"/>
<text x="34.0" y="455.3" fill="#0a0e28" stroke="#0a0e28" stroke-width="0.35" textLength="28.3" lengthAdjust="spacing">Select</text>
<text x="15.3" y="466.1" fill="#0a0e28" stroke="#0a0e28" stroke-width="0.35" textLength="66.4" lengthAdjust="spacing">Measurement</text>
<rect x="41.0" y="469.0" width="15.0" height="8.8" rx="4.4" fill="#12e2e2"/>
<text x="48.5" y="476.8" fill="#000" text-anchor="middle" stroke="#000" stroke-width="0.3" style="font-size:9.7px">2</text>
<text x="103.5" y="460.8" fill="#0a0e28" stroke="#0a0e28" stroke-width="0.35" textLength="38.0" lengthAdjust="spacing">Remove</text>
<text x="89.0" y="471.2" fill="#0a0e28" stroke="#0a0e28" stroke-width="0.35" textLength="67.0" lengthAdjust="spacing">Measurement</text>
<text x="179.8" y="461.0" fill="#0a0e28" stroke="#0a0e28" stroke-width="0.35" textLength="31.5" lengthAdjust="spacing">Gating</text>
<rect x="179.3" y="464.2" width="33.4" height="9.3" fill="#d4dcf6"/>
<text x="180.0" y="471.5" fill="#0a0e28" stroke="#0a0e28" stroke-width="0.35" textLength="32.0" lengthAdjust="spacing">Screen</text>
<text x="247.3" y="460.8" fill="#0a0e28" stroke="#0a0e28" stroke-width="0.35" textLength="44.2" lengthAdjust="spacing">Statistics</text>
<rect x="261.9" y="464.2" width="15" height="9.3" fill="#d4dcf6"/>
<text x="263.0" y="471.5" fill="#0a0e28" stroke="#0a0e28" stroke-width="0.35" textLength="12.8" lengthAdjust="spacing">On</text>
<text x="319.7" y="460.8" fill="#0a0e28" stroke="#0a0e28" stroke-width="0.35" textLength="47.5" lengthAdjust="spacing">Reference</text>
<text x="328.5" y="471.2" fill="#0a0e28" stroke="#0a0e28" stroke-width="0.35" textLength="30.0" lengthAdjust="spacing">Levels</text>
<text x="392.4" y="466.1" fill="#0a0e28" stroke="#0a0e28" stroke-width="0.35" textLength="49.2" lengthAdjust="spacing">Indicators</text>
<text x="466.6" y="460.8" fill="#0a0e28" stroke="#0a0e28" stroke-width="0.35" textLength="48.8" lengthAdjust="spacing">Configure</text>
<text x="472.2" y="471.2" fill="#0a0e28" stroke="#0a0e28" stroke-width="0.35" textLength="37.5" lengthAdjust="spacing">Cursors</text>
</svg></body></html>
